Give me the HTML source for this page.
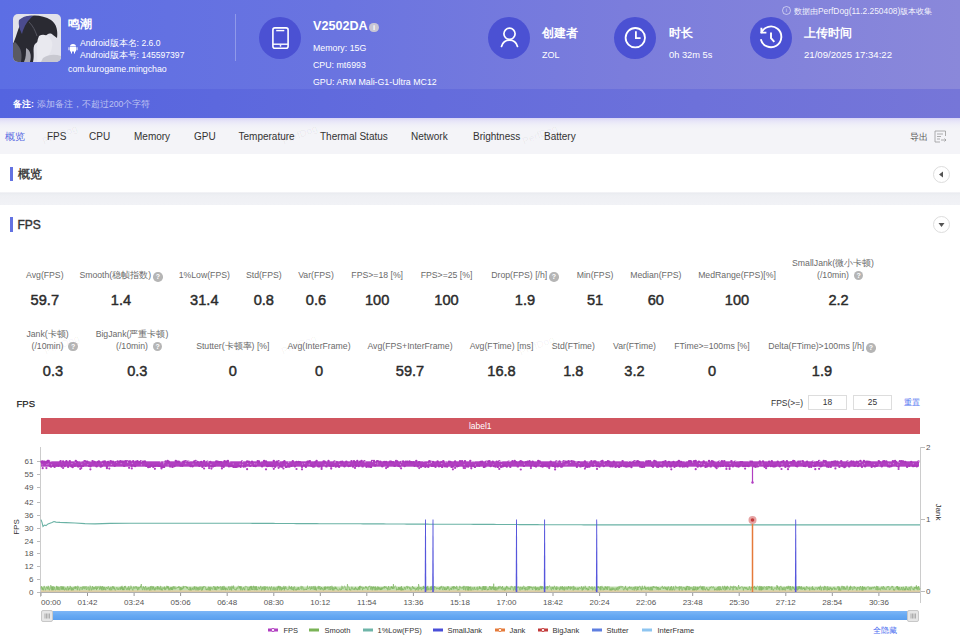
<!DOCTYPE html>
<html><head><meta charset="utf-8">
<style>
*{margin:0;padding:0;box-sizing:border-box}
html,body{width:960px;height:638px;overflow:hidden;background:#fff;font-family:"Liberation Sans",sans-serif}
.a{position:absolute;white-space:nowrap}
#hdr{position:absolute;left:0;top:0;width:960px;height:89px;background:linear-gradient(90deg,#5c6ee4 0%,#6a74e0 35%,#7b7ddc 65%,#8a88da 100%)}
#note{position:absolute;left:0;top:89px;width:960px;height:29px;background:linear-gradient(90deg,#5464e0 0%,#646cdc 45%,#7676d8 100%)}
.w{color:#fff}
.circ{position:absolute;width:42px;height:42px;border-radius:50%;background:#4b51d3}
#tabs{position:absolute;left:0;top:118px;width:960px;height:36px;background:linear-gradient(180deg,#d9d5f5 0px,#e7e5f8 3px,#f0f0f8 7px,#f4f4f8 11px,#f4f4f8 100%)}
.tab{position:absolute;top:130.5px;font-size:10px;color:#333;line-height:12px}
.lbl{position:absolute;font-size:8.7px;color:#6a6a6a;line-height:11px;text-align:center;white-space:nowrap}
.val{position:absolute;font-size:14.6px;font-weight:normal;-webkit-text-stroke:0.45px #2b2b2b;color:#2b2b2b;line-height:16px;text-align:center;white-space:nowrap}
.q{display:inline-block;width:9.5px;height:9.5px;border-radius:50%;background:#b5b5b5;color:#fff;font-size:7px;line-height:9.5px;text-align:center;font-weight:bold;vertical-align:-1.5px;margin-left:2px}
.lg{top:624.5px;font-size:7.5px;color:#333;line-height:11px}
.hi{font-size:8.8px;line-height:12px}
</style></head><body>
<div id="hdr"></div>
<div id="note"></div>
<!-- app icon -->
<svg class="a" style="left:13px;top:14px" width="48" height="48" viewBox="0 0 48 48">
 <defs><clipPath id="rc"><rect x="0" y="0" width="48" height="48" rx="5"/></clipPath>
 <filter id="bl"><feGaussianBlur stdDeviation="0.7"/></filter></defs>
 <g clip-path="url(#rc)">
  <rect width="48" height="48" fill="#e2e2ea"/>
  <g filter="url(#bl)">
  <path d="M10 4 C18 0 30 1 38 6 C44 10 45 18 44 24 L40 21 C37 18 34 20 32 23 C29 27 26 26 22 30 C19 34 22 40 20 48 L0 48 L0 30 C3 24 5 14 10 4z" fill="#2a2a33"/>
  <path d="M6 6 C10 2 16 1 20 2 C15 6 11 12 9 20 C7 16 5 11 6 6z" fill="#4b4c8e"/>
  <path d="M26 22 C31 19 37 22 39 28 C40 35 37 41 32 46 L24 48 C25 40 22 31 26 22z" fill="#e9e9ef"/>
  <path d="M2 28 C6 32 10 36 8 48 L0 48 L0 30z" fill="#5a5a64"/>
  <path d="M13 34 C17 36 19 41 17 48 L11 48 C13 44 13 39 13 34z" fill="#a4a4ae"/>
  <path d="M30 44 C36 40 42 40 48 42 L48 48 L28 48z" fill="#c8c8d0"/>
  <path d="M16 8 C20 12 22 16 24 22" stroke="#55555f" stroke-width="1" fill="none"/>
  </g>
 </g>
</svg>
<div class="a w" style="left:68px;top:15.5px;font-size:12px;font-weight:bold;line-height:16px">鸣潮</div>
<div class="a w hi" style="left:80px;top:36.5px;font-size:8.6px">Android版本名: 2.6.0</div>
<div class="a w hi" style="left:80px;top:48.5px;font-size:8.6px">Android版本号: 145597397</div>
<div class="a w hi" style="left:68px;top:63px">com.kurogame.mingchao</div>
<svg class="a" style="left:68px;top:43px" width="10" height="11" viewBox="0 0 10 11"><path d="M2 4h6v4.5h-6z M0.5 4.2h1v3h-1z M8.5 4.2h1v3h-1z M3 8.5h1v2h-1z M6 8.5h1v2h-1z M2 3.5a3 2.5 0 0 1 6 0z" fill="#fff"/></svg>
<div class="a" style="left:234.5px;top:14px;width:1px;height:47px;background:rgba(255,255,255,0.28)"></div>
<!-- device -->
<div class="circ" style="left:259px;top:17px"></div>
<svg class="a" style="left:271px;top:26px" width="20" height="24" viewBox="0 0 20 24"><rect x="1.9" y="1.9" width="15.2" height="20.3" rx="2" fill="none" stroke="#fff" stroke-width="1.6"/><line x1="5.2" y1="4.6" x2="13.3" y2="4.6" stroke="#fff" stroke-width="1.4"/><line x1="1.9" y1="18.2" x2="17.1" y2="18.2" stroke="#fff" stroke-width="1.4"/><circle cx="9.5" cy="19.8" r="0.9" fill="#fff"/></svg>
<div class="a w" style="left:313px;top:17.5px;font-size:12.6px;font-weight:bold;line-height:16px">V2502DA</div>
<div class="a" style="left:369.3px;top:22.5px;width:9.5px;height:9.5px;border-radius:50%;background:#c8c6d4;color:#fff;font-size:7.5px;line-height:9.5px;text-align:center;font-weight:bold">i</div>
<div class="a w hi" style="left:313px;top:41.5px">Memory: 15G</div>
<div class="a w hi" style="left:313px;top:58.5px">CPU: mt6993</div>
<div class="a w hi" style="left:313px;top:75.5px">GPU: ARM Mali-G1-Ultra MC12</div>
<!-- creator -->
<div class="circ" style="left:488px;top:17px"></div>
<svg class="a" style="left:498.5px;top:27px" width="21" height="22" viewBox="0 0 21 22"><circle cx="10.5" cy="6.8" r="5.6" fill="none" stroke="#fff" stroke-width="1.7"/><path d="M2.5 19.5 C3.8 15 7 13.2 10.5 13.2 C14 13.2 17.2 15 18.5 19.5" fill="none" stroke="#fff" stroke-width="1.7" stroke-linecap="round"/></svg>
<div class="a w" style="left:542px;top:25.5px;font-size:12px;font-weight:bold;line-height:15px">创建者</div>
<div class="a w" style="left:542px;top:49px;font-size:9px;line-height:12px">ZOL</div>
<!-- duration -->
<div class="circ" style="left:614px;top:17px"></div>
<svg class="a" style="left:624px;top:27px" width="22" height="22" viewBox="0 0 22 22"><circle cx="11.3" cy="10.7" r="9.7" fill="none" stroke="#fff" stroke-width="1.8"/><path d="M11.9 4.3V11.1H16.6" fill="none" stroke="#fff" stroke-width="1.8"/></svg>
<div class="a w" style="left:669px;top:25.5px;font-size:12px;font-weight:bold;line-height:15px">时长</div>
<div class="a w" style="left:669px;top:49px;font-size:9.3px;line-height:12px">0h 32m 5s</div>
<!-- upload -->
<div class="circ" style="left:750px;top:17px"></div>
<svg class="a" style="left:759px;top:26px;overflow:visible" width="24" height="24" viewBox="0 0 24 24"><path d="M2.2 7.2 A10.4 10.4 0 1 1 1.8 13.2" fill="none" stroke="#fff" stroke-width="1.9"/><path d="M2.4 1.8 V6.6 H7.4" fill="none" stroke="#fff" stroke-width="1.9" stroke-linejoin="miter"/><path d="M12 6.5v5.6l3.3 3.8" fill="none" stroke="#fff" stroke-width="1.9"/></svg>
<div class="a w" style="left:804px;top:25.5px;font-size:12px;font-weight:bold;line-height:15px">上传时间</div>
<div class="a w" style="left:804px;top:49px;font-size:9.6px;line-height:12px">21/09/2025 17:34:22</div>
<div class="a" style="left:782px;top:5.5px;width:9px;height:9px;border-radius:50%;border:1px solid rgba(255,255,255,0.55);color:rgba(255,255,255,0.7);font-size:6px;line-height:7px;text-align:center">i</div>
<div class="a" style="left:794px;top:4.5px;font-size:8.4px;line-height:12px;color:rgba(255,255,255,0.92)">数据由PerfDog(11.2.250408)版本收集</div>
<!-- note -->
<div class="a w" style="left:13px;top:97.5px;font-size:8.6px;font-weight:bold;line-height:12px">备注:</div>
<div class="a" style="left:37px;top:97.5px;font-size:8.6px;line-height:12px;color:rgba(255,255,255,0.6)">添加备注，不超过200个字符</div>
<!-- tabs -->
<div id="tabs"></div>
<div class="tab" style="left:5px;color:#5668e2">概览</div>
<div class="tab" style="left:47px">FPS</div>
<div class="tab" style="left:89px">CPU</div>
<div class="tab" style="left:134px">Memory</div>
<div class="tab" style="left:194px">GPU</div>
<div class="tab" style="left:238.5px">Temperature</div>
<div class="tab" style="left:320px">Thermal Status</div>
<div class="tab" style="left:411px">Network</div>
<div class="tab" style="left:473px">Brightness</div>
<div class="tab" style="left:544px">Battery</div>
<div class="tab" style="left:910px;font-size:9px;color:#555;top:131px">导出</div>
<svg class="a" style="left:934px;top:130px" width="13" height="13" viewBox="0 0 13 13"><path d="M11.5 6V1H1v11h5" fill="none" stroke="#999" stroke-width="0.8"/><path d="M3 4h6M3 6.5h4M3 9h3M7 10h5M10.5 8.5l1.5 1.5-1.5 1.5" fill="none" stroke="#999" stroke-width="0.8"/></svg>
<!-- sections -->
<div class="a" style="left:0;top:192px;width:960px;height:13px;background:linear-gradient(180deg,#fafafc 0px,#e9eaef 1px,#eceef2 2px,#eff0f4 4px,#f1f2f6 100%)"></div>
<div class="a" style="left:10px;top:166.5px;width:3px;height:14.5px;background:#6372e2"></div>
<div class="a" style="left:18px;top:166px;font-size:12px;-webkit-text-stroke:0.35px #333;color:#333;line-height:16px">概览</div>
<div class="a" style="left:932.5px;top:165.5px;width:17px;height:17px;border-radius:50%;border:1px solid #ddd"></div>
<svg class="a" style="left:937px;top:170px" width="9" height="9" viewBox="0 0 9 9"><path d="M6 1.5v6l-4-3z" fill="#555"/></svg>
<div class="a" style="left:10px;top:217px;width:3px;height:15px;background:#6372e2"></div>
<div class="a" style="left:17.5px;top:216.5px;font-size:12px;-webkit-text-stroke:0.4px #333;color:#333;line-height:16px">FPS</div>
<div class="a" style="left:932.5px;top:215.5px;width:17px;height:17px;border-radius:50%;border:1px solid #ddd"></div>
<svg class="a" style="left:937px;top:220px" width="9" height="9" viewBox="0 0 9 9"><path d="M1.5 3h6l-3 4z" fill="#555"/></svg>
<!-- metrics -->
<div class="lbl" style="left:-45.2px;top:269.5px;width:180px">Avg(FPS)</div>
<div class="val" style="left:-5.200000000000003px;top:291.5px;width:100px">59.7</div>
<div class="lbl" style="left:31px;top:269.5px;width:180px">Smooth(稳帧指数)<span class="q">?</span></div>
<div class="val" style="left:71px;top:291.5px;width:100px">1.4</div>
<div class="lbl" style="left:114.30000000000001px;top:269.5px;width:180px">1%Low(FPS)</div>
<div class="val" style="left:154.3px;top:291.5px;width:100px">31.4</div>
<div class="lbl" style="left:173.8px;top:269.5px;width:180px">Std(FPS)</div>
<div class="val" style="left:213.8px;top:291.5px;width:100px">0.8</div>
<div class="lbl" style="left:226px;top:269.5px;width:180px">Var(FPS)</div>
<div class="val" style="left:266px;top:291.5px;width:100px">0.6</div>
<div class="lbl" style="left:287.2px;top:269.5px;width:180px">FPS&gt;=18 [%]</div>
<div class="val" style="left:327.2px;top:291.5px;width:100px">100</div>
<div class="lbl" style="left:356.5px;top:269.5px;width:180px">FPS&gt;=25 [%]</div>
<div class="val" style="left:396.5px;top:291.5px;width:100px">100</div>
<div class="lbl" style="left:435px;top:269.5px;width:180px">Drop(FPS) [/h]<span class="q">?</span></div>
<div class="val" style="left:475px;top:291.5px;width:100px">1.9</div>
<div class="lbl" style="left:505px;top:269.5px;width:180px">Min(FPS)</div>
<div class="val" style="left:545px;top:291.5px;width:100px">51</div>
<div class="lbl" style="left:565.8px;top:269.5px;width:180px">Median(FPS)</div>
<div class="val" style="left:605.8px;top:291.5px;width:100px">60</div>
<div class="lbl" style="left:647px;top:269.5px;width:180px">MedRange(FPS)[%]</div>
<div class="val" style="left:687px;top:291.5px;width:100px">100</div>
<div class="lbl" style="left:743px;top:257.5px;width:180px">SmallJank(微小卡顿)</div><div class="lbl" style="left:743px;top:269.5px;width:180px"><span style="position:relative">(/10min)<span class="q" style="position:absolute;left:100%;top:1px;margin-left:5px">?</span></span></div>
<div class="val" style="left:788.6px;top:291.5px;width:100px">2.2</div>
<div class="lbl" style="left:-42.5px;top:328.5px;width:180px">Jank(卡顿)</div><div class="lbl" style="left:-42.5px;top:340.5px;width:180px"><span style="position:relative">(/10min)<span class="q" style="position:absolute;left:100%;top:1px;margin-left:5px">?</span></span></div>
<div class="val" style="left:3px;top:363px;width:100px">0.3</div>
<div class="lbl" style="left:42px;top:328.5px;width:180px">BigJank(严重卡顿)</div><div class="lbl" style="left:42px;top:340.5px;width:180px"><span style="position:relative">(/10min)<span class="q" style="position:absolute;left:100%;top:1px;margin-left:5px">?</span></span></div>
<div class="val" style="left:87.30000000000001px;top:363px;width:100px">0.3</div>
<div class="lbl" style="left:142.8px;top:340.5px;width:180px">Stutter(卡顿率) [%]</div>
<div class="val" style="left:182.8px;top:363px;width:100px">0</div>
<div class="lbl" style="left:229px;top:340.5px;width:180px">Avg(InterFrame)</div>
<div class="val" style="left:269px;top:363px;width:100px">0</div>
<div class="lbl" style="left:320px;top:340.5px;width:180px">Avg(FPS+InterFrame)</div>
<div class="val" style="left:360px;top:363px;width:100px">59.7</div>
<div class="lbl" style="left:411.5px;top:340.5px;width:180px">Avg(FTime) [ms]</div>
<div class="val" style="left:451.5px;top:363px;width:100px">16.8</div>
<div class="lbl" style="left:483.29999999999995px;top:340.5px;width:180px">Std(FTime)</div>
<div class="val" style="left:523.3px;top:363px;width:100px">1.8</div>
<div class="lbl" style="left:544.5px;top:340.5px;width:180px">Var(FTime)</div>
<div class="val" style="left:584.5px;top:363px;width:100px">3.2</div>
<div class="lbl" style="left:622px;top:340.5px;width:180px">FTime&gt;=100ms [%]</div>
<div class="val" style="left:662px;top:363px;width:100px">0</div>
<div class="lbl" style="left:732px;top:340.5px;width:180px">Delta(FTime)&gt;100ms [/h]<span class="q">?</span></div>
<div class="val" style="left:772px;top:363px;width:100px">1.9</div>
<!-- chart controls -->
<div class="a" style="left:16.5px;top:398px;font-size:9.5px;color:#222;-webkit-text-stroke:0.25px #222;line-height:12px">FPS</div>
<div class="a" style="left:771px;top:396.5px;font-size:8.5px;color:#333;line-height:12px">FPS(&gt;=)</div>
<div class="a" style="left:808px;top:395px;width:39px;height:15px;border:1px solid #ddd;font-size:8.4px;line-height:13px;text-align:center;color:#333">18</div>
<div class="a" style="left:853px;top:395px;width:39px;height:15px;border:1px solid #ddd;font-size:8.4px;line-height:13px;text-align:center;color:#333">25</div>
<div class="a" style="left:904px;top:397px;font-size:8px;color:#4a6cf0;line-height:12px">重置</div>
<div class="a" style="left:40.5px;top:418px;width:879.5px;height:16px;background:#d0555f;color:#fff;font-size:8.5px;line-height:16px;text-align:center">label1</div>
<svg class="a" style="left:0;top:0" width="960" height="638" viewBox="0 0 960 638" font-family="Liberation Sans, sans-serif">
<line x1="40.5" y1="447" x2="40.5" y2="597" stroke="#ccc" stroke-width="1"/>
<line x1="920.5" y1="447" x2="920.5" y2="603" stroke="#ccc" stroke-width="1"/>
<line x1="37" y1="592.5" x2="40" y2="592.5" stroke="#bbb"/>
<text x="33.5" y="595.3" text-anchor="end" font-size="8" fill="#555">0</text>
<line x1="37" y1="579.5" x2="40" y2="579.5" stroke="#bbb"/>
<text x="33.5" y="582.3" text-anchor="end" font-size="8" fill="#555">6</text>
<line x1="37" y1="566.5" x2="40" y2="566.5" stroke="#bbb"/>
<text x="33.5" y="569.3" text-anchor="end" font-size="8" fill="#555">12</text>
<line x1="37" y1="553.5" x2="40" y2="553.5" stroke="#bbb"/>
<text x="33.5" y="556.3" text-anchor="end" font-size="8" fill="#555">18</text>
<line x1="37" y1="541.5" x2="40" y2="541.5" stroke="#bbb"/>
<text x="33.5" y="544.3" text-anchor="end" font-size="8" fill="#555">24</text>
<line x1="37" y1="528.5" x2="40" y2="528.5" stroke="#bbb"/>
<text x="33.5" y="531.3" text-anchor="end" font-size="8" fill="#555">30</text>
<line x1="37" y1="515.5" x2="40" y2="515.5" stroke="#bbb"/>
<text x="33.5" y="518.3" text-anchor="end" font-size="8" fill="#555">36</text>
<line x1="37" y1="502.5" x2="40" y2="502.5" stroke="#bbb"/>
<text x="33.5" y="505.3" text-anchor="end" font-size="8" fill="#555">42</text>
<line x1="37" y1="487.5" x2="40" y2="487.5" stroke="#bbb"/>
<text x="33.5" y="490.3" text-anchor="end" font-size="8" fill="#555">49</text>
<line x1="37" y1="474.5" x2="40" y2="474.5" stroke="#bbb"/>
<text x="33.5" y="477.3" text-anchor="end" font-size="8" fill="#555">55</text>
<line x1="37" y1="461.5" x2="40" y2="461.5" stroke="#bbb"/>
<text x="33.5" y="464.3" text-anchor="end" font-size="8" fill="#555">61</text>
<line x1="921" y1="447.5" x2="925" y2="447.5" stroke="#bbb"/>
<text x="926" y="450.3" font-size="8" fill="#555">2</text>
<line x1="921" y1="519.5" x2="925" y2="519.5" stroke="#bbb"/>
<text x="926" y="522.3" font-size="8" fill="#555">1</text>
<line x1="921" y1="591.5" x2="925" y2="591.5" stroke="#bbb"/>
<text x="926" y="594.3" font-size="8" fill="#555">0</text>
<line x1="41.0" y1="592" x2="41.0" y2="596" stroke="#999"/>
<text x="41.0" y="605" font-size="8" fill="#555">00:00</text>
<line x1="87.5" y1="592" x2="87.5" y2="596" stroke="#999"/>
<text x="87.5" y="605" text-anchor="middle" font-size="8" fill="#555">01:42</text>
<line x1="134.1" y1="592" x2="134.1" y2="596" stroke="#999"/>
<text x="134.1" y="605" text-anchor="middle" font-size="8" fill="#555">03:24</text>
<line x1="180.6" y1="592" x2="180.6" y2="596" stroke="#999"/>
<text x="180.6" y="605" text-anchor="middle" font-size="8" fill="#555">05:06</text>
<line x1="227.2" y1="592" x2="227.2" y2="596" stroke="#999"/>
<text x="227.2" y="605" text-anchor="middle" font-size="8" fill="#555">06:48</text>
<line x1="273.8" y1="592" x2="273.8" y2="596" stroke="#999"/>
<text x="273.8" y="605" text-anchor="middle" font-size="8" fill="#555">08:30</text>
<line x1="320.3" y1="592" x2="320.3" y2="596" stroke="#999"/>
<text x="320.3" y="605" text-anchor="middle" font-size="8" fill="#555">10:12</text>
<line x1="366.8" y1="592" x2="366.8" y2="596" stroke="#999"/>
<text x="366.8" y="605" text-anchor="middle" font-size="8" fill="#555">11:54</text>
<line x1="413.4" y1="592" x2="413.4" y2="596" stroke="#999"/>
<text x="413.4" y="605" text-anchor="middle" font-size="8" fill="#555">13:36</text>
<line x1="459.9" y1="592" x2="459.9" y2="596" stroke="#999"/>
<text x="459.9" y="605" text-anchor="middle" font-size="8" fill="#555">15:18</text>
<line x1="506.5" y1="592" x2="506.5" y2="596" stroke="#999"/>
<text x="506.5" y="605" text-anchor="middle" font-size="8" fill="#555">17:00</text>
<line x1="553.0" y1="592" x2="553.0" y2="596" stroke="#999"/>
<text x="553.0" y="605" text-anchor="middle" font-size="8" fill="#555">18:42</text>
<line x1="599.6" y1="592" x2="599.6" y2="596" stroke="#999"/>
<text x="599.6" y="605" text-anchor="middle" font-size="8" fill="#555">20:24</text>
<line x1="646.1" y1="592" x2="646.1" y2="596" stroke="#999"/>
<text x="646.1" y="605" text-anchor="middle" font-size="8" fill="#555">22:06</text>
<line x1="692.7" y1="592" x2="692.7" y2="596" stroke="#999"/>
<text x="692.7" y="605" text-anchor="middle" font-size="8" fill="#555">23:48</text>
<line x1="739.2" y1="592" x2="739.2" y2="596" stroke="#999"/>
<text x="739.2" y="605" text-anchor="middle" font-size="8" fill="#555">25:30</text>
<line x1="785.8" y1="592" x2="785.8" y2="596" stroke="#999"/>
<text x="785.8" y="605" text-anchor="middle" font-size="8" fill="#555">27:12</text>
<line x1="832.3" y1="592" x2="832.3" y2="596" stroke="#999"/>
<text x="832.3" y="605" text-anchor="middle" font-size="8" fill="#555">28:54</text>
<line x1="878.9" y1="592" x2="878.9" y2="596" stroke="#999"/>
<text x="878.9" y="605" text-anchor="middle" font-size="8" fill="#555">30:36</text>
<text transform="translate(18.5,527) rotate(-90)" text-anchor="middle" font-size="8" fill="#333">FPS</text>
<text transform="translate(936,512) rotate(90)" text-anchor="middle" font-size="8" fill="#333">Jank</text>
<line x1="41" y1="588.6" x2="920" y2="588.6" stroke="#a8d48e" stroke-width="4" opacity="0.7"/>
<polyline points="41.00,588.5 41.40,586.2 41.80,588.2 42.20,589.8 42.60,587.6 43.00,590.3 43.40,590.3 43.80,587.3 44.20,585.9 44.60,587.5 45.00,588.2 45.39,590.4 45.79,589.5 46.19,588.4 46.59,586.6 46.99,587.6 47.39,587.4 47.79,589.3 48.19,585.8 48.59,587.2 48.99,589.6 49.39,590.4 49.79,588.7 50.19,588.8 50.59,585.3 50.99,586.2 51.39,585.9 51.79,590.4 52.19,586.9 52.59,590.3 52.99,586.0 53.39,590.1 53.79,590.2 54.19,586.8 54.58,588.0 54.98,589.8 55.38,590.1 55.78,590.1 56.18,589.7 56.58,585.9 56.98,589.2 57.38,589.7 57.78,586.5 58.18,590.2 58.58,589.7 58.98,586.9 59.38,589.3 59.78,590.3 60.18,589.5 60.58,588.9 60.98,586.0 61.38,587.9 61.78,589.8 62.18,586.2 62.58,589.5 62.98,587.1 63.37,589.7 63.77,586.4 64.17,588.6 64.57,590.5 64.97,589.5 65.37,589.4 65.77,587.8 66.17,589.8 66.57,590.4 66.97,588.0 67.37,587.7 67.77,586.2 68.17,590.6 68.57,588.5 68.97,589.8 69.37,587.9 69.77,588.9 70.17,585.9 70.57,587.3 70.97,590.0 71.37,590.6 71.77,587.3 72.16,590.6 72.56,588.3 72.96,589.1 73.36,590.3 73.76,587.1 74.16,587.1 74.56,586.8 74.96,589.0 75.36,586.3 75.76,588.7 76.16,586.5 76.56,587.6 76.96,587.8 77.36,590.3 77.76,585.8 78.16,587.1 78.56,587.1 78.96,588.5 79.36,590.3 79.76,590.6 80.16,588.3 80.56,587.3 80.95,587.7 81.35,588.1 81.75,587.4 82.15,589.9 82.55,587.5 82.95,586.3 83.35,587.4 83.75,588.6 84.15,586.2 84.55,588.8 84.95,589.2 85.35,588.3 85.75,586.5 86.15,586.0 86.55,589.9 86.95,589.4 87.35,588.7 87.75,588.3 88.15,586.6 88.55,588.5 88.95,590.6 89.34,590.5 89.74,587.9 90.14,585.7 90.54,586.2 90.94,589.5 91.34,590.5 91.74,588.5 92.14,587.5 92.54,586.0 92.94,589.7 93.34,588.2 93.74,587.2 94.14,589.4 94.54,587.3 94.94,587.7 95.34,588.8 95.74,586.2 96.14,586.1 96.54,590.1 96.94,587.6 97.34,588.9 97.74,586.4 98.13,586.1 98.53,587.5 98.93,587.2 99.33,587.6 99.73,589.7 100.13,585.9 100.53,588.1 100.93,589.1 101.33,586.5 101.73,590.3 102.13,588.0 102.53,586.1 102.93,590.4 103.33,589.9 103.73,586.8 104.13,590.0 104.53,587.1 104.93,587.3 105.33,588.3 105.73,590.3 106.13,588.1 106.53,587.1 106.92,588.1 107.32,588.0 107.72,588.8 108.12,586.3 108.52,586.5 108.92,588.1 109.32,589.7 109.72,588.2 110.12,590.6 110.52,588.2 110.92,586.8 111.32,588.3 111.72,590.4 112.12,588.7 112.52,586.2 112.92,588.4 113.32,588.6 113.72,586.3 114.12,589.2 114.52,587.7 114.92,590.1 115.32,590.6 115.72,589.6 116.11,589.1 116.51,587.7 116.91,587.1 117.31,588.2 117.71,589.7 118.11,588.6 118.51,588.7 118.91,589.9 119.31,587.6 119.71,588.1 120.11,587.7 120.51,589.6 120.91,586.7 121.31,589.2 121.71,586.2 122.11,585.8 122.51,590.1 122.91,587.1 123.31,590.2 123.71,588.6 124.11,590.1 124.50,586.1 124.90,587.4 125.30,585.9 125.70,588.2 126.10,588.2 126.50,589.8 126.90,590.2 127.30,588.0 127.70,587.9 128.10,589.8 128.50,586.6 128.90,586.1 129.30,590.4 129.70,588.4 130.10,589.1 130.50,588.2 130.90,585.7 131.30,586.6 131.70,588.5 132.10,588.7 132.50,589.9 132.90,590.6 133.30,586.8 133.69,586.5 134.09,588.7 134.49,588.2 134.89,586.7 135.29,586.2 135.69,586.9 136.09,588.7 136.49,586.4 136.89,586.9 137.29,588.7 137.69,590.4 138.09,586.9 138.49,587.6 138.89,589.6 139.29,587.4 139.69,587.5 140.09,588.1 140.49,585.8 140.89,587.3 141.29,584.0 141.69,587.1 142.08,588.7 142.48,589.8 142.88,590.2 143.28,586.3 143.68,588.2 144.08,587.9 144.48,587.6 144.88,590.3 145.28,587.0 145.68,586.1 146.08,588.4 146.48,588.3 146.88,590.4 147.28,588.6 147.68,587.8 148.08,589.3 148.48,588.0 148.88,587.2 149.28,590.6 149.68,590.5 150.08,587.0 150.48,586.3 150.88,590.5 151.27,586.1 151.67,586.3 152.07,588.4 152.47,589.5 152.87,586.1 153.27,588.4 153.67,586.7 154.07,590.1 154.47,588.5 154.87,590.5 155.27,590.1 155.67,587.4 156.07,589.4 156.47,588.6 156.87,588.1 157.27,586.0 157.67,589.5 158.07,586.3 158.47,587.6 158.87,589.4 159.27,587.9 159.67,587.6 160.06,589.8 160.46,585.9 160.86,586.4 161.26,590.4 161.66,588.6 162.06,590.2 162.46,590.4 162.86,587.4 163.26,587.6 163.66,588.4 164.06,589.0 164.46,586.6 164.86,590.1 165.26,587.6 165.66,589.7 166.06,589.4 166.46,588.9 166.86,585.8 167.26,588.0 167.66,586.2 168.06,588.9 168.45,586.4 168.85,590.3 169.25,588.3 169.65,589.2 170.05,590.3 170.45,587.5 170.85,589.2 171.25,587.3 171.65,590.0 172.05,587.1 172.45,590.1 172.85,587.9 173.25,586.1 173.65,588.6 174.05,589.2 174.45,588.7 174.85,586.3 175.25,588.9 175.65,588.9 176.05,588.8 176.45,587.9 176.85,588.0 177.25,587.9 177.64,587.0 178.04,587.6 178.44,588.0 178.84,586.0 179.24,586.7 179.64,588.0 180.04,590.3 180.44,587.1 180.84,590.3 181.24,590.0 181.64,587.5 182.04,589.6 182.44,588.1 182.84,588.8 183.24,585.9 183.64,588.3 184.04,587.2 184.44,586.2 184.84,586.6 185.24,586.5 185.64,586.6 186.03,586.0 186.43,588.1 186.83,586.8 187.23,588.6 187.63,587.1 188.03,588.9 188.43,589.7 188.83,589.3 189.23,590.4 189.63,590.1 190.03,586.9 190.43,590.4 190.83,587.8 191.23,590.5 191.63,589.8 192.03,589.6 192.43,587.8 192.83,589.8 193.23,589.9 193.63,589.2 194.03,586.7 194.43,589.4 194.82,586.2 195.22,588.0 195.62,588.3 196.02,590.5 196.42,586.8 196.82,588.1 197.22,589.4 197.62,587.5 198.02,590.7 198.42,588.9 198.82,587.2 199.22,589.9 199.62,589.1 200.02,586.4 200.42,587.6 200.82,589.4 201.22,590.0 201.62,590.7 202.02,586.5 202.42,590.3 202.82,587.2 203.22,588.3 203.62,586.0 204.01,586.5 204.41,586.8 204.81,586.2 205.21,586.6 205.61,588.0 206.01,589.9 206.41,589.2 206.81,590.3 207.21,588.4 207.61,588.9 208.01,590.2 208.41,588.4 208.81,586.6 209.21,590.7 209.61,587.2 210.01,587.9 210.41,590.7 210.81,586.8 211.21,587.7 211.61,588.9 212.01,589.2 212.41,588.8 212.80,589.5 213.20,587.1 213.60,586.1 214.00,587.1 214.40,586.6 214.80,590.0 215.20,587.4 215.60,589.8 216.00,586.6 216.40,590.3 216.80,589.9 217.20,588.7 217.60,586.2 218.00,588.2 218.40,586.9 218.80,588.8 219.20,587.1 219.60,587.3 220.00,586.8 220.40,586.3 220.80,589.0 221.19,590.2 221.59,588.2 221.99,586.6 222.39,589.9 222.79,586.3 223.19,589.0 223.59,590.0 223.99,585.9 224.39,587.2 224.79,589.7 225.19,587.6 225.59,590.3 225.99,587.9 226.39,589.1 226.79,588.9 227.19,590.1 227.59,590.0 227.99,588.0 228.39,588.0 228.79,586.2 229.19,586.7 229.59,590.1 229.99,589.3 230.38,589.5 230.78,586.6 231.18,588.0 231.58,590.6 231.98,585.8 232.38,587.5 232.78,587.4 233.18,588.8 233.58,585.6 233.98,588.4 234.38,588.8 234.78,589.9 235.18,589.4 235.58,589.1 235.98,590.5 236.38,590.0 236.78,587.8 237.18,588.7 237.58,587.3 237.98,587.0 238.38,585.8 238.78,586.5 239.17,588.6 239.57,586.3 239.97,588.1 240.37,586.3 240.77,590.4 241.17,586.3 241.57,587.8 241.97,589.2 242.37,590.4 242.77,588.5 243.17,588.8 243.57,587.3 243.97,589.5 244.37,588.8 244.77,590.4 245.17,586.0 245.57,586.4 245.97,586.7 246.37,587.0 246.77,586.3 247.17,586.8 247.56,588.1 247.96,590.7 248.36,589.2 248.76,590.4 249.16,586.7 249.56,589.0 249.96,590.5 250.36,586.3 250.76,588.3 251.16,585.9 251.56,589.7 251.96,586.2 252.36,589.8 252.76,589.0 253.16,589.9 253.56,585.8 253.96,587.6 254.36,586.4 254.76,590.2 255.16,589.2 255.56,586.4 255.96,590.0 256.36,586.1 256.75,590.3 257.15,589.2 257.55,589.7 257.95,589.6 258.35,586.8 258.75,587.5 259.15,587.8 259.55,589.2 259.95,587.4 260.35,587.6 260.75,585.9 261.15,588.1 261.55,590.5 261.95,589.3 262.35,586.8 262.75,589.3 263.15,589.5 263.55,588.0 263.95,586.3 264.35,590.5 264.75,587.0 265.14,586.1 265.54,589.8 265.94,587.5 266.34,587.5 266.74,588.2 267.14,586.5 267.54,588.1 267.94,589.9 268.34,589.9 268.74,589.6 269.14,586.9 269.54,586.8 269.94,588.3 270.34,587.9 270.74,590.5 271.14,587.2 271.54,586.4 271.94,588.3 272.34,588.6 272.74,589.4 273.14,590.4 273.54,587.9 273.94,586.8 274.33,590.0 274.73,590.5 275.13,587.7 275.53,589.4 275.93,590.3 276.33,589.9 276.73,589.9 277.13,586.6 277.53,590.4 277.93,588.9 278.33,585.9 278.73,588.3 279.13,585.9 279.53,588.5 279.93,590.5 280.33,586.3 280.73,588.8 281.13,588.6 281.53,590.5 281.93,587.0 282.33,589.6 282.73,588.0 283.12,588.4 283.52,588.9 283.92,585.9 284.32,590.5 284.72,587.5 285.12,589.0 285.52,586.5 285.92,586.3 286.32,588.8 286.72,588.8 287.12,589.7 287.52,589.8 287.92,589.9 288.32,589.7 288.72,589.2 289.12,585.8 289.52,586.5 289.92,588.8 290.32,587.3 290.72,588.2 291.12,589.4 291.51,586.2 291.91,589.4 292.31,590.0 292.71,588.9 293.11,587.1 293.51,590.6 293.91,588.8 294.31,586.4 294.71,586.9 295.11,590.4 295.51,589.5 295.91,590.0 296.31,590.6 296.71,588.6 297.11,590.0 297.51,589.4 297.91,587.4 298.31,589.7 298.71,587.2 299.11,588.8 299.51,589.6 299.91,589.0 300.31,588.6 300.70,587.9 301.10,585.9 301.50,587.4 301.90,589.6 302.30,587.4 302.70,586.4 303.10,587.6 303.50,588.6 303.90,590.4 304.30,589.1 304.70,589.3 305.10,588.7 305.50,589.9 305.90,589.5 306.30,589.0 306.70,590.0 307.10,587.3 307.50,585.7 307.90,588.9 308.30,588.7 308.70,588.3 309.10,588.4 309.49,588.0 309.89,586.3 310.29,589.4 310.69,589.8 311.09,587.7 311.49,588.9 311.89,586.1 312.29,587.6 312.69,588.7 313.09,589.4 313.49,586.4 313.89,586.2 314.29,590.0 314.69,589.2 315.09,585.9 315.49,589.8 315.89,587.4 316.29,590.7 316.69,588.8 317.09,588.3 317.49,588.0 317.88,588.0 318.28,585.9 318.68,589.0 319.08,589.2 319.48,587.3 319.88,586.0 320.28,589.9 320.68,588.3 321.08,588.9 321.48,587.0 321.88,589.5 322.28,589.1 322.68,588.2 323.08,590.4 323.48,590.2 323.88,590.2 324.28,586.9 324.68,589.9 325.08,586.4 325.48,589.5 325.88,586.8 326.28,587.2 326.68,587.2 327.07,589.1 327.47,586.6 327.87,587.9 328.27,587.2 328.67,586.6 329.07,590.1 329.47,587.4 329.87,587.9 330.27,586.1 330.67,590.1 331.07,588.6 331.47,588.8 331.87,585.8 332.27,587.2 332.67,590.5 333.07,587.1 333.47,590.1 333.87,590.6 334.27,588.3 334.67,589.2 335.07,586.6 335.46,588.8 335.86,586.9 336.26,588.8 336.66,588.0 337.06,590.0 337.46,590.2 337.86,589.5 338.26,590.1 338.66,590.6 339.06,590.0 339.46,589.4 339.86,588.3 340.26,589.4 340.66,590.4 341.06,589.2 341.46,589.8 341.86,585.8 342.26,586.4 342.66,588.7 343.06,588.8 343.46,588.0 343.86,587.6 344.25,586.1 344.65,585.8 345.05,586.6 345.45,588.7 345.85,590.1 346.25,588.9 346.65,589.2 347.05,590.7 347.45,584.2 347.85,586.7 348.25,587.1 348.65,586.8 349.05,586.9 349.45,590.2 349.85,588.7 350.25,589.5 350.65,590.6 351.05,589.6 351.45,588.9 351.85,586.7 352.25,587.6 352.65,589.3 353.05,589.1 353.44,589.1 353.84,589.7 354.24,588.0 354.64,589.8 355.04,590.0 355.44,586.9 355.84,588.7 356.24,588.1 356.64,589.7 357.04,589.1 357.44,590.2 357.84,588.6 358.24,589.6 358.64,587.2 359.04,589.4 359.44,586.0 359.84,589.8 360.24,585.8 360.64,587.6 361.04,587.5 361.44,587.7 361.83,586.5 362.23,588.2 362.63,590.2 363.03,587.3 363.43,587.4 363.83,588.8 364.23,587.8 364.63,588.2 365.03,587.6 365.43,587.8 365.83,586.1 366.23,588.4 366.63,587.1 367.03,587.1 367.43,588.7 367.83,590.1 368.23,588.3 368.63,586.6 369.03,586.1 369.43,586.8 369.83,585.8 370.23,586.4 370.62,589.5 371.02,588.5 371.42,586.4 371.82,589.3 372.22,590.4 372.62,586.8 373.02,589.5 373.42,586.5 373.82,588.0 374.22,586.8 374.62,588.9 375.02,590.5 375.42,586.5 375.82,590.1 376.22,588.8 376.62,587.7 377.02,590.4 377.42,589.7 377.82,586.4 378.22,589.7 378.62,587.2 379.02,589.2 379.42,589.3 379.81,587.3 380.21,590.1 380.61,588.4 381.01,590.1 381.41,587.7 381.81,589.7 382.21,587.3 382.61,588.9 383.01,588.7 383.41,587.6 383.81,586.7 384.21,588.5 384.61,586.1 385.01,587.2 385.41,587.9 385.81,586.4 386.21,586.5 386.61,588.5 387.01,588.8 387.41,587.8 387.81,590.4 388.20,589.3 388.60,586.0 389.00,587.3 389.40,589.5 389.80,590.1 390.20,589.5 390.60,589.0 391.00,586.5 391.40,588.0 391.80,586.3 392.20,588.9 392.60,587.2 393.00,589.0 393.40,584.1 393.80,588.4 394.20,588.4 394.60,587.4 395.00,585.9 395.40,585.8 395.80,586.6 396.20,587.3 396.60,590.4 397.00,588.7 397.39,589.6 397.79,589.7 398.19,590.0 398.59,587.1 398.99,589.9 399.39,587.6 399.79,589.5 400.19,587.1 400.59,590.1 400.99,590.6 401.39,586.1 401.79,590.6 402.19,588.1 402.59,590.2 402.99,589.2 403.39,590.1 403.79,590.1 404.19,588.2 404.59,586.9 404.99,588.7 405.39,589.6 405.79,588.0 406.18,586.5 406.58,586.5 406.98,585.9 407.38,588.7 407.78,586.5 408.18,587.6 408.58,586.7 408.98,587.2 409.38,587.1 409.78,589.2 410.18,587.5 410.58,590.5 410.98,590.3 411.38,590.2 411.78,589.1 412.18,587.5 412.58,586.0 412.98,588.2 413.38,588.8 413.78,587.1 414.18,588.9 414.57,588.4 414.97,588.6 415.37,590.5 415.77,590.4 416.17,588.0 416.57,589.6 416.97,588.9 417.37,588.3 417.77,587.0 418.17,590.7 418.57,584.1 418.97,586.0 419.37,587.8 419.77,589.2 420.17,587.8 420.57,588.3 420.97,587.0 421.37,590.3 421.77,589.4 422.17,588.6 422.57,588.7 422.97,587.4 423.37,585.9 423.76,589.1 424.16,586.7 424.56,587.5 424.96,587.0 425.36,587.6 425.76,586.1 426.16,590.6 426.56,587.0 426.96,590.7 427.36,588.7 427.76,585.9 428.16,590.3 428.56,588.5 428.96,588.9 429.36,588.6 429.76,589.1 430.16,590.4 430.56,586.6 430.96,588.0 431.36,590.1 431.76,586.0 432.15,586.2 432.55,588.7 432.95,586.6 433.35,586.4 433.75,590.6 434.15,588.9 434.55,586.1 434.95,587.3 435.35,586.9 435.75,587.1 436.15,587.8 436.55,589.0 436.95,589.0 437.35,588.2 437.75,587.9 438.15,588.9 438.55,588.3 438.95,589.1 439.35,589.6 439.75,587.1 440.15,589.4 440.55,586.6 440.94,587.2 441.34,587.7 441.74,585.9 442.14,588.5 442.54,589.6 442.94,590.2 443.34,586.5 443.74,587.3 444.14,588.0 444.54,590.0 444.94,586.9 445.34,590.2 445.74,589.6 446.14,588.1 446.54,590.1 446.94,587.8 447.34,586.2 447.74,588.9 448.14,587.2 448.54,586.5 448.94,589.4 449.34,590.6 449.74,589.5 450.13,589.5 450.53,588.3 450.93,589.3 451.33,588.2 451.73,589.9 452.13,586.5 452.53,588.0 452.93,588.1 453.33,586.2 453.73,589.4 454.13,586.1 454.53,586.8 454.93,588.5 455.33,587.1 455.73,588.2 456.13,589.0 456.53,586.0 456.93,586.1 457.33,590.4 457.73,590.2 458.13,590.1 458.52,589.2 458.92,590.4 459.32,588.5 459.72,585.9 460.12,586.5 460.52,588.1 460.92,588.1 461.32,588.1 461.72,588.3 462.12,587.2 462.52,588.3 462.92,588.3 463.32,585.9 463.72,590.0 464.12,589.1 464.52,586.1 464.92,586.0 465.32,586.5 465.72,590.6 466.12,587.8 466.52,587.7 466.92,586.1 467.31,588.2 467.71,590.6 468.11,586.4 468.51,590.6 468.91,586.6 469.31,588.2 469.71,587.0 470.11,590.7 470.51,586.8 470.91,586.6 471.31,589.1 471.71,590.6 472.11,589.4 472.51,588.1 472.91,587.4 473.31,589.6 473.71,589.8 474.11,589.5 474.51,586.9 474.91,589.5 475.31,589.4 475.71,589.5 476.11,589.8 476.50,589.2 476.90,587.1 477.30,586.8 477.70,590.3 478.10,589.5 478.50,588.7 478.90,588.9 479.30,586.2 479.70,588.8 480.10,586.8 480.50,589.0 480.90,588.8 481.30,587.8 481.70,588.4 482.10,590.6 482.50,588.8 482.90,586.2 483.30,589.7 483.70,586.0 484.10,589.0 484.50,590.0 484.89,586.1 485.29,590.0 485.69,586.4 486.09,586.0 486.49,588.9 486.89,589.4 487.29,590.4 487.69,589.0 488.09,589.2 488.49,590.1 488.89,588.1 489.29,587.0 489.69,586.0 490.09,589.6 490.49,589.2 490.89,586.2 491.29,589.9 491.69,587.9 492.09,586.8 492.49,588.4 492.89,586.5 493.29,589.8 493.69,583.7 494.08,588.7 494.48,589.9 494.88,587.1 495.28,590.6 495.68,586.8 496.08,587.5 496.48,588.4 496.88,590.5 497.28,587.7 497.68,588.4 498.08,589.2 498.48,586.4 498.88,588.7 499.28,588.4 499.68,586.2 500.08,586.1 500.48,586.4 500.88,588.2 501.28,589.3 501.68,587.1 502.08,587.8 502.48,586.0 502.87,590.2 503.27,589.0 503.67,588.3 504.07,588.2 504.47,590.7 504.87,589.4 505.27,587.6 505.67,590.3 506.07,588.3 506.47,585.9 506.87,588.5 507.27,586.8 507.67,586.6 508.07,589.5 508.47,588.2 508.87,588.0 509.27,588.3 509.67,589.3 510.07,588.2 510.47,589.7 510.87,586.6 511.26,585.9 511.66,587.3 512.06,587.2 512.46,586.8 512.86,586.7 513.26,589.5 513.66,590.6 514.06,589.0 514.46,587.7 514.86,586.1 515.26,590.4 515.66,590.2 516.06,586.4 516.46,589.8 516.86,587.0 517.26,587.6 517.66,587.1 518.06,586.4 518.46,586.8 518.86,587.9 519.26,587.6 519.66,588.8 520.06,590.6 520.45,586.8 520.85,587.5 521.25,587.3 521.65,589.2 522.05,589.8 522.45,587.3 522.85,589.1 523.25,586.2 523.65,586.0 524.05,586.0 524.45,589.1 524.85,588.1 525.25,590.5 525.65,588.1 526.05,587.0 526.45,589.7 526.85,589.5 527.25,590.4 527.65,589.0 528.05,586.0 528.45,588.7 528.85,589.6 529.24,586.0 529.64,588.6 530.04,587.0 530.44,587.6 530.84,586.3 531.24,588.0 531.64,588.1 532.04,586.9 532.44,590.0 532.84,589.4 533.24,587.1 533.64,586.9 534.04,587.2 534.44,588.6 534.84,588.4 535.24,586.3 535.64,590.4 536.04,587.3 536.44,590.1 536.84,587.9 537.24,588.7 537.63,587.4 538.03,590.5 538.43,590.1 538.83,587.4 539.23,588.8 539.63,590.2 540.03,586.5 540.43,587.8 540.83,585.9 541.23,589.2 541.63,586.4 542.03,588.7 542.43,586.3 542.83,586.8 543.23,588.5 543.63,588.6 544.03,589.2 544.43,588.7 544.83,586.9 545.23,588.4 545.63,588.5 546.03,586.3 546.42,586.8 546.82,587.4 547.22,589.3 547.62,586.0 548.02,587.4 548.42,587.5 548.82,586.9 549.22,585.9 549.62,585.6 550.02,586.9 550.42,587.7 550.82,588.8 551.22,589.7 551.62,590.4 552.02,586.7 552.42,588.8 552.82,587.2 553.22,587.0 553.62,589.5 554.02,587.9 554.42,585.8 554.82,586.9 555.22,587.1 555.61,589.4 556.01,588.1 556.41,589.9 556.81,586.3 557.21,589.3 557.61,588.6 558.01,587.7 558.41,588.1 558.81,587.9 559.21,589.0 559.61,590.3 560.01,587.3 560.41,586.6 560.81,589.4 561.21,586.6 561.61,587.5 562.01,589.2 562.41,586.1 562.81,589.8 563.21,590.3 563.61,587.1 564.00,588.3 564.40,590.6 564.80,586.5 565.20,587.2 565.60,589.1 566.00,589.6 566.40,589.2 566.80,586.7 567.20,587.7 567.60,589.6 568.00,587.7 568.40,586.0 568.80,588.5 569.20,586.6 569.60,587.4 570.00,589.0 570.40,589.6 570.80,586.4 571.20,588.9 571.60,587.2 572.00,587.3 572.40,586.6 572.79,587.8 573.19,590.5 573.59,585.9 573.99,586.5 574.39,588.2 574.79,589.8 575.19,587.4 575.59,589.1 575.99,589.3 576.39,589.0 576.79,589.5 577.19,588.0 577.59,587.8 577.99,590.2 578.39,588.4 578.79,589.2 579.19,587.0 579.59,587.5 579.99,588.2 580.39,588.8 580.79,588.4 581.19,588.1 581.59,586.3 581.98,590.6 582.38,590.6 582.78,587.7 583.18,589.8 583.58,586.6 583.98,587.3 584.38,588.5 584.78,588.0 585.18,585.8 585.58,586.6 585.98,589.5 586.38,588.0 586.78,589.2 587.18,588.2 587.58,590.3 587.98,590.6 588.38,588.8 588.78,590.2 589.18,586.1 589.58,587.0 589.98,587.8 590.38,588.4 590.77,587.4 591.17,588.5 591.57,589.1 591.97,586.4 592.37,587.5 592.77,590.4 593.17,589.1 593.57,588.0 593.97,587.6 594.37,586.7 594.77,587.0 595.17,590.5 595.57,590.0 595.97,590.6 596.37,588.4 596.77,589.1 597.17,586.6 597.57,587.6 597.97,586.1 598.37,587.9 598.77,586.7 599.16,587.2 599.56,588.3 599.96,589.5 600.36,586.2 600.76,590.4 601.16,589.5 601.56,586.6 601.96,585.9 602.36,587.6 602.76,587.2 603.16,590.4 603.56,588.8 603.96,587.9 604.36,588.9 604.76,590.0 605.16,586.2 605.56,588.2 605.96,586.9 606.36,589.5 606.76,587.1 607.16,586.5 607.56,589.8 607.96,586.6 608.35,587.0 608.75,587.2 609.15,586.6 609.55,589.9 609.95,590.6 610.35,588.8 610.75,590.5 611.15,587.7 611.55,590.5 611.95,589.3 612.35,590.2 612.75,587.6 613.15,589.9 613.55,588.9 613.95,587.9 614.35,588.8 614.75,590.5 615.15,589.8 615.55,590.7 615.95,587.8 616.35,588.0 616.75,590.1 617.14,587.2 617.54,587.2 617.94,590.5 618.34,589.3 618.74,586.8 619.14,586.2 619.54,588.8 619.94,586.9 620.34,585.9 620.74,586.4 621.14,587.7 621.54,586.3 621.94,586.3 622.34,586.6 622.74,586.0 623.14,588.7 623.54,590.1 623.94,590.4 624.34,589.3 624.74,587.7 625.14,588.5 625.53,585.9 625.93,588.9 626.33,589.8 626.73,589.7 627.13,588.2 627.53,590.7 627.93,589.4 628.33,587.6 628.73,587.2 629.13,588.3 629.53,586.5 629.93,588.6 630.33,588.8 630.73,587.1 631.13,587.3 631.53,586.9 631.93,589.7 632.33,589.9 632.73,588.7 633.13,587.1 633.53,587.4 633.93,590.4 634.33,590.5 634.72,586.7 635.12,588.0 635.52,588.9 635.92,586.3 636.32,590.6 636.72,590.4 637.12,590.1 637.52,586.7 637.92,590.1 638.32,587.1 638.72,588.0 639.12,586.5 639.52,585.9 639.92,586.9 640.32,586.7 640.72,589.4 641.12,588.2 641.52,590.4 641.92,587.7 642.32,585.8 642.72,589.3 643.12,588.2 643.51,588.8 643.91,588.3 644.31,588.3 644.71,585.8 645.11,588.7 645.51,587.4 645.91,590.0 646.31,587.7 646.71,588.5 647.11,588.9 647.51,587.3 647.91,588.3 648.31,590.0 648.71,587.0 649.11,587.4 649.51,588.5 649.91,590.5 650.31,589.1 650.71,586.9 651.11,590.5 651.51,588.4 651.90,586.8 652.30,590.5 652.70,588.4 653.10,586.2 653.50,587.5 653.90,586.2 654.30,587.7 654.70,587.1 655.10,586.8 655.50,588.2 655.90,588.0 656.30,586.5 656.70,588.0 657.10,589.9 657.50,587.0 657.90,588.6 658.30,587.1 658.70,590.1 659.10,589.9 659.50,588.3 659.90,588.9 660.30,589.8 660.70,587.7 661.09,587.3 661.49,587.7 661.89,587.7 662.29,585.9 662.69,587.5 663.09,588.7 663.49,587.5 663.89,589.0 664.29,586.8 664.69,586.6 665.09,587.5 665.49,589.2 665.89,586.8 666.29,589.2 666.69,590.1 667.09,587.6 667.49,590.3 667.89,587.0 668.29,586.4 668.69,588.4 669.09,589.3 669.49,589.3 669.88,590.6 670.28,586.8 670.68,589.8 671.08,590.3 671.48,586.1 671.88,587.8 672.28,590.5 672.68,589.0 673.08,588.9 673.48,586.4 673.88,590.1 674.28,590.3 674.68,590.2 675.08,588.7 675.48,585.8 675.88,586.3 676.28,587.0 676.68,588.4 677.08,587.4 677.48,588.1 677.88,588.2 678.27,587.3 678.67,586.8 679.07,590.3 679.47,590.5 679.87,586.0 680.27,588.6 680.67,587.9 681.07,586.9 681.47,586.5 681.87,590.7 682.27,590.3 682.67,590.4 683.07,586.9 683.47,587.4 683.87,588.1 684.27,588.4 684.67,587.4 685.07,590.0 685.47,588.1 685.87,590.7 686.27,586.6 686.67,589.9 687.07,585.9 687.46,587.0 687.86,586.1 688.26,590.1 688.66,589.6 689.06,586.2 689.46,590.1 689.86,589.5 690.26,587.2 690.66,588.6 691.06,588.4 691.46,588.5 691.86,587.2 692.26,587.9 692.66,590.5 693.06,588.9 693.46,590.3 693.86,586.1 694.26,590.6 694.66,588.9 695.06,590.0 695.46,586.6 695.86,589.8 696.25,590.6 696.65,589.6 697.05,586.8 697.45,589.8 697.85,586.9 698.25,589.2 698.65,589.0 699.05,586.8 699.45,586.7 699.85,587.8 700.25,586.1 700.65,585.8 701.05,586.7 701.45,589.2 701.85,586.6 702.25,589.7 702.65,586.4 703.05,590.5 703.45,589.3 703.85,586.1 704.25,586.7 704.64,589.5 705.04,589.0 705.44,590.4 705.84,588.7 706.24,588.7 706.64,587.3 707.04,589.1 707.44,588.9 707.84,590.5 708.24,589.2 708.64,590.6 709.04,590.6 709.44,588.9 709.84,587.1 710.24,586.8 710.64,588.3 711.04,587.0 711.44,586.8 711.84,586.3 712.24,587.4 712.64,588.1 713.04,588.1 713.43,586.5 713.83,587.0 714.23,587.8 714.63,590.5 715.03,588.9 715.43,589.9 715.83,590.0 716.23,588.3 716.63,589.2 717.03,590.7 717.43,587.1 717.83,586.9 718.23,590.3 718.63,587.1 719.03,586.1 719.43,590.5 719.83,589.0 720.23,586.4 720.63,590.1 721.03,589.4 721.43,590.2 721.83,588.7 722.23,588.6 722.62,586.1 723.02,586.2 723.42,589.6 723.82,588.4 724.22,587.7 724.62,585.8 725.02,590.6 725.42,589.7 725.82,586.6 726.22,589.5 726.62,586.8 727.02,589.4 727.42,585.9 727.82,587.2 728.22,587.0 728.62,588.2 729.02,588.1 729.42,589.1 729.82,590.0 730.22,589.7 730.62,586.0 731.01,586.2 731.41,586.5 731.81,587.9 732.21,587.1 732.61,586.6 733.01,590.4 733.41,588.3 733.81,585.8 734.21,587.4 734.61,587.3 735.01,587.6 735.41,586.3 735.81,586.8 736.21,589.7 736.61,587.4 737.01,588.6 737.41,589.5 737.81,589.6 738.21,587.3 738.61,585.0 739.01,587.7 739.41,587.7 739.80,589.0 740.20,587.4 740.60,587.4 741.00,587.4 741.40,586.7 741.80,586.7 742.20,586.5 742.60,587.6 743.00,587.7 743.40,590.7 743.80,587.6 744.20,587.8 744.60,586.9 745.00,588.4 745.40,587.3 745.80,589.0 746.20,588.8 746.60,587.3 747.00,589.2 747.40,590.1 747.80,588.6 748.20,589.0 748.60,589.7 748.99,588.2 749.39,586.3 749.79,588.3 750.19,589.4 750.59,590.4 750.99,589.3 751.39,586.9 751.79,587.8 752.19,587.1 752.59,590.1 752.99,586.6 753.39,586.9 753.79,587.9 754.19,587.7 754.59,585.9 754.99,589.4 755.39,588.8 755.79,587.4 756.19,589.6 756.59,587.7 756.99,587.4 757.38,585.8 757.78,586.2 758.18,586.7 758.58,587.8 758.98,590.2 759.38,590.1 759.78,585.9 760.18,590.4 760.58,586.7 760.98,586.5 761.38,590.5 761.78,586.2 762.18,590.1 762.58,587.3 762.98,586.9 763.38,588.7 763.78,589.4 764.18,586.3 764.58,586.9 764.98,587.3 765.38,587.0 765.78,587.8 766.17,589.9 766.57,587.7 766.97,586.0 767.37,589.6 767.77,588.3 768.17,588.6 768.57,586.0 768.97,586.6 769.37,588.3 769.77,586.4 770.17,587.3 770.57,587.3 770.97,587.1 771.37,589.9 771.77,586.2 772.17,588.0 772.57,588.9 772.97,590.4 773.37,590.5 773.77,589.0 774.17,589.0 774.57,588.6 774.97,587.5 775.36,588.1 775.76,588.5 776.16,589.4 776.56,589.5 776.96,585.0 777.36,588.1 777.76,586.0 778.16,589.6 778.56,588.3 778.96,588.0 779.36,587.3 779.76,590.5 780.16,586.1 780.56,586.4 780.96,585.9 781.36,587.1 781.76,588.6 782.16,590.3 782.56,587.7 782.96,590.1 783.36,590.0 783.75,587.8 784.15,586.8 784.55,590.0 784.95,590.0 785.35,590.6 785.75,587.4 786.15,588.3 786.55,586.6 786.95,586.7 787.35,589.0 787.75,586.9 788.15,585.9 788.55,588.6 788.95,585.9 789.35,586.4 789.75,589.4 790.15,590.4 790.55,586.0 790.95,590.0 791.35,590.4 791.75,590.3 792.15,586.7 792.54,586.5 792.94,588.5 793.34,586.8 793.74,588.7 794.14,588.5 794.54,590.1 794.94,588.6 795.34,586.6 795.74,586.4 796.14,589.9 796.54,586.6 796.94,587.5 797.34,590.5 797.74,588.6 798.14,586.1 798.54,589.4 798.94,588.0 799.34,586.1 799.74,588.8 800.14,586.7 800.54,588.1 800.94,589.5 801.34,586.2 801.73,589.3 802.13,589.3 802.53,589.4 802.93,587.4 803.33,589.0 803.73,587.8 804.13,587.5 804.53,590.2 804.93,587.7 805.33,590.2 805.73,590.0 806.13,589.4 806.53,586.1 806.93,586.6 807.33,587.7 807.73,587.6 808.13,589.1 808.53,587.9 808.93,587.5 809.33,587.2 809.73,590.6 810.12,588.6 810.52,588.0 810.92,587.7 811.32,587.4 811.72,588.0 812.12,590.1 812.52,586.3 812.92,589.3 813.32,588.2 813.72,589.8 814.12,590.3 814.52,589.3 814.92,589.8 815.32,588.1 815.72,587.5 816.12,587.6 816.52,587.7 816.92,588.4 817.32,589.7 817.72,587.8 818.12,587.7 818.52,586.9 818.91,588.9 819.31,587.1 819.71,589.8 820.11,585.9 820.51,585.8 820.91,588.8 821.31,590.6 821.71,587.2 822.11,586.9 822.51,587.1 822.91,587.6 823.31,587.4 823.71,590.3 824.11,587.2 824.51,585.9 824.91,589.9 825.31,588.9 825.71,586.3 826.11,587.2 826.51,588.2 826.91,590.3 827.31,590.7 827.71,586.2 828.10,587.6 828.50,589.9 828.90,588.5 829.30,590.2 829.70,588.4 830.10,586.8 830.50,589.1 830.90,587.8 831.30,588.0 831.70,590.5 832.10,588.3 832.50,589.9 832.90,588.6 833.30,587.7 833.70,587.7 834.10,586.8 834.50,589.5 834.90,588.0 835.30,589.5 835.70,588.6 836.10,589.5 836.50,589.4 836.89,588.6 837.29,587.9 837.69,588.0 838.09,586.0 838.49,590.3 838.89,590.6 839.29,586.7 839.69,590.6 840.09,588.3 840.49,590.6 840.89,590.7 841.29,589.2 841.69,585.9 842.09,586.5 842.49,586.2 842.89,589.5 843.29,588.4 843.69,586.2 844.09,589.7 844.49,586.7 844.89,587.8 845.28,589.5 845.68,588.2 846.08,589.6 846.48,587.8 846.88,585.8 847.28,585.8 847.68,588.2 848.08,590.3 848.48,590.2 848.88,590.3 849.28,589.7 849.68,586.9 850.08,590.0 850.48,585.8 850.88,588.5 851.28,587.3 851.68,586.8 852.08,586.9 852.48,590.1 852.88,589.8 853.28,589.3 853.68,588.6 854.08,586.1 854.47,586.9 854.87,588.7 855.27,587.5 855.67,587.3 856.07,588.1 856.47,588.8 856.87,590.7 857.27,588.2 857.67,587.1 858.07,588.7 858.47,587.8 858.87,587.3 859.27,586.9 859.67,590.2 860.07,589.5 860.47,586.0 860.87,587.1 861.27,587.6 861.67,589.6 862.07,590.6 862.47,586.0 862.87,590.7 863.26,587.4 863.66,586.9 864.06,589.6 864.46,586.9 864.86,588.2 865.26,587.7 865.66,589.8 866.06,589.8 866.46,587.8 866.86,587.6 867.26,587.5 867.66,586.6 868.06,586.4 868.46,586.6 868.86,587.3 869.26,589.5 869.66,587.5 870.06,587.7 870.46,587.7 870.86,589.5 871.26,587.3 871.65,589.1 872.05,588.5 872.45,587.6 872.85,586.9 873.25,587.1 873.65,588.5 874.05,587.5 874.45,586.6 874.85,588.0 875.25,587.6 875.65,588.4 876.05,590.0 876.45,585.9 876.85,587.0 877.25,590.4 877.65,586.1 878.05,586.7 878.45,589.8 878.85,590.2 879.25,588.3 879.65,589.3 880.05,590.0 880.45,590.4 880.84,587.8 881.24,588.6 881.64,587.2 882.04,586.4 882.44,589.3 882.84,587.8 883.24,587.4 883.64,586.1 884.04,589.7 884.44,587.6 884.84,588.0 885.24,588.4 885.64,589.0 886.04,590.0 886.44,588.4 886.84,587.1 887.24,586.3 887.64,587.5 888.04,586.3 888.44,586.5 888.84,586.0 889.24,589.8 889.63,589.9 890.03,588.8 890.43,588.9 890.83,588.7 891.23,586.8 891.63,587.2 892.03,585.9 892.43,587.2 892.83,586.2 893.23,588.7 893.63,590.4 894.03,589.1 894.43,590.7 894.83,590.3 895.23,588.3 895.63,587.6 896.03,587.4 896.43,587.7 896.83,586.0 897.23,589.4 897.63,586.0 898.02,589.5 898.42,587.4 898.82,590.3 899.22,587.2 899.62,587.3 900.02,590.3 900.42,589.8 900.82,589.8 901.22,588.4 901.62,587.0 902.02,590.2 902.42,590.3 902.82,588.3 903.22,586.8 903.62,588.1 904.02,590.6 904.42,588.8 904.82,590.2 905.22,588.1 905.62,590.3 906.02,586.1 906.42,588.0 906.82,587.8 907.21,589.9 907.61,588.5 908.01,590.5 908.41,590.2 908.81,588.4 909.21,586.9 909.61,589.3 910.01,590.7 910.41,590.5 910.81,586.4 911.21,586.1 911.61,587.4 912.01,588.6 912.41,588.7 912.81,589.0 913.21,589.7 913.61,588.6 914.01,590.4 914.41,587.2 914.81,588.4 915.21,587.7 915.61,586.9 916.00,588.8 916.40,585.3 916.80,589.4 917.20,587.1 917.60,588.2 918.00,590.3 918.40,586.1 918.80,588.3 919.20,588.7 919.60,589.7 920.00,588.2" fill="none" stroke="#78b25a" stroke-width="0.6"/>
<line x1="41" y1="591.2" x2="920" y2="591.2" stroke="#cdb57a" stroke-width="1.3" opacity="0.9"/>
<line x1="41" y1="592.5" x2="920" y2="592.5" stroke="#b0b0b0" stroke-width="1"/>
<polyline points="41.0,519.6 42.0,522.4 43.0,526.4 44.5,525.1 46.0,525.6 48.0,523.9 50.0,523.2 52.0,522.6 54.0,521.5 56.0,522.1 60.0,522.4 66.0,522.6 75.0,523.0 85.0,523.6 95.0,523.9 110.0,523.4 130.0,523.2 150.0,523.2 152.6,523.2 155.1,523.2 157.7,523.2 160.3,523.2 162.8,523.2 165.4,523.2 168.0,523.2 170.5,523.2 173.1,523.2 175.7,523.2 178.2,523.2 180.8,523.2 183.4,523.2 185.9,523.2 188.5,523.2 191.1,523.2 193.6,523.2 196.2,523.2 198.8,523.2 201.3,523.2 203.9,523.2 206.5,523.2 209.0,523.2 211.6,523.2 214.2,523.2 216.7,523.2 219.3,523.2 221.9,523.2 224.4,523.2 227.0,523.2 229.6,523.3 232.1,523.3 234.7,523.3 237.3,523.3 239.8,523.3 242.4,523.3 245.0,523.3 247.5,523.3 250.1,523.3 252.7,523.4 255.2,523.4 257.8,523.4 260.4,523.4 262.9,523.4 265.5,523.4 268.1,523.4 270.6,523.4 273.2,523.4 275.8,523.5 278.3,523.5 280.9,523.5 283.5,523.5 286.0,523.5 288.6,523.5 291.2,523.5 293.7,523.5 296.3,523.6 298.9,523.6 301.4,523.6 304.0,523.6 306.6,523.6 309.1,523.6 311.7,523.6 314.3,523.6 316.8,523.6 319.4,523.7 322.0,523.7 324.5,523.7 327.1,523.7 329.7,523.7 332.2,523.7 334.8,523.7 337.4,523.7 339.9,523.8 342.5,523.8 345.1,523.8 347.6,523.8 350.2,523.8 352.8,523.8 355.3,523.8 357.9,523.8 360.5,523.8 363.0,523.9 365.6,523.9 368.2,523.9 370.7,523.9 373.3,523.9 375.9,523.9 378.4,523.9 381.0,523.9 383.6,523.9 386.1,524.0 388.7,524.0 391.3,524.0 393.8,524.0 396.4,524.0 399.0,524.0 401.5,524.0 404.1,524.0 406.7,524.1 409.2,524.1 411.8,524.1 414.4,524.1 416.9,524.1 419.5,524.1 422.1,524.1 424.6,524.1 427.2,524.1 429.8,524.2 432.3,524.2 434.9,524.2 437.5,524.2 440.0,524.2 442.6,524.2 445.2,524.2 447.7,524.2 450.3,524.2 452.9,524.3 455.4,524.3 458.0,524.3 460.6,524.3 463.1,524.3 465.7,524.3 468.3,524.3 470.8,524.3 473.4,524.4 476.0,524.4 478.5,524.4 481.1,524.4 483.7,524.4 486.2,524.4 488.8,524.4 491.4,524.4 493.9,524.4 496.5,524.5 499.1,524.5 501.6,524.5 504.2,524.5 506.8,524.5 509.3,524.5 511.9,524.5 514.5,524.5 517.0,524.5 519.6,524.6 522.2,524.6 524.7,524.6 527.3,524.6 529.9,524.6 532.4,524.6 535.0,524.6 537.6,524.6 540.1,524.7 542.7,524.7 545.3,524.7 547.8,524.7 550.4,524.7 553.0,524.7 555.5,524.7 558.1,524.7 560.7,524.7 563.2,524.8 565.8,524.8 568.4,524.8 570.9,524.8 573.5,524.8 576.1,524.8 578.6,524.8 581.2,524.8 583.8,524.9 586.3,524.9 588.9,524.9 591.5,524.9 594.0,524.9 596.6,524.9 599.2,524.9 601.7,524.9 604.3,524.9 606.9,524.9 609.4,524.9 612.0,524.9 614.6,524.9 617.1,524.9 619.7,524.9 622.3,524.9 624.8,524.9 627.4,524.9 630.0,524.9 632.5,524.9 635.1,524.9 637.7,524.9 640.2,524.9 642.8,524.9 645.4,524.9 647.9,524.9 650.5,524.9 653.1,524.9 655.6,524.9 658.2,524.9 660.8,524.9 663.3,524.9 665.9,524.9 668.5,524.9 671.0,524.9 673.6,524.9 676.2,524.9 678.7,524.9 681.3,524.9 683.9,524.9 686.4,524.9 689.0,524.9 691.6,524.9 694.1,524.9 696.7,524.9 699.3,524.9 701.8,524.9 704.4,524.9 707.0,524.9 709.5,524.9 712.1,524.9 714.7,524.9 717.2,524.9 719.8,524.9 722.4,524.9 724.9,524.9 727.5,524.9 730.1,524.9 732.6,524.9 735.2,524.9 737.8,524.9 740.3,524.9 742.9,524.9 745.5,524.9 748.0,524.9 750.6,524.9 753.2,524.9 755.7,524.9 758.3,524.9 760.9,524.9 763.4,524.9 766.0,524.9 768.6,524.9 771.1,524.9 773.7,524.9 776.3,524.9 778.8,524.9 781.4,524.9 784.0,524.9 786.5,524.9 789.1,524.9 791.7,524.9 794.2,524.9 796.8,524.9 799.4,524.9 801.9,524.9 804.5,524.9 807.1,524.9 809.6,524.9 812.2,524.9 814.8,524.9 817.3,524.9 819.9,524.9 822.5,524.9 825.0,524.9 827.6,524.9 830.2,524.9 832.7,524.9 835.3,524.9 837.9,524.9 840.4,524.9 843.0,524.9 845.6,524.9 848.1,524.9 850.7,524.9 853.3,524.9 855.8,524.9 858.4,524.9 861.0,524.9 863.5,524.9 866.1,524.9 868.7,524.9 871.2,524.9 873.8,524.9 876.4,524.9 878.9,524.9 881.5,524.9 884.1,524.9 886.6,524.9 889.2,524.9 891.8,524.9 894.3,524.9 896.9,524.9 899.5,524.9 902.0,524.9 904.6,524.9 907.2,524.9 909.7,524.9 912.3,524.9 914.9,524.9 917.4,524.9 920.0,524.9" fill="none" stroke="#6ab2a5" stroke-width="1.1"/>
<rect x="41" y="461.3" width="878" height="5.4" fill="#b13ec1"/>
<circle cx="41.5" cy="461.7" r="1.2" fill="#ab38bb"/>
<rect x="41.5" y="464.3" width="1.1" height="1.1" fill="#cf86d8"/>
<circle cx="42.7" cy="461.5" r="1.2" fill="#ab38bb"/>
<circle cx="42.7" cy="468.2" r="1.1" fill="#b13ec1"/>
<circle cx="44.5" cy="461.8" r="1.2" fill="#ab38bb"/>
<circle cx="46.4" cy="461.9" r="1.2" fill="#ab38bb"/>
<rect x="46.4" y="464.0" width="1.1" height="1.1" fill="#cf86d8"/>
<circle cx="46.4" cy="468.1" r="1.1" fill="#b13ec1"/>
<circle cx="47.7" cy="460.9" r="1.2" fill="#ab38bb"/>
<rect x="47.7" y="463.4" width="1.1" height="1.1" fill="#cf86d8"/>
<circle cx="48.7" cy="461.0" r="1.2" fill="#ab38bb"/>
<circle cx="50.1" cy="466.1" r="1.2" fill="#ab38bb"/>
<rect x="50.1" y="460.7" width="1.3" height="1.2" fill="#e4bfe9"/>
<circle cx="51.1" cy="466.6" r="1.2" fill="#ab38bb"/>
<rect x="51.1" y="464.3" width="1.1" height="1.1" fill="#cf86d8"/>
<circle cx="53.2" cy="465.7" r="1.2" fill="#ab38bb"/>
<circle cx="54.6" cy="466.7" r="1.2" fill="#ab38bb"/>
<circle cx="56.7" cy="465.6" r="1.2" fill="#ab38bb"/>
<circle cx="58.5" cy="465.8" r="1.2" fill="#ab38bb"/>
<circle cx="60.6" cy="461.3" r="1.2" fill="#ab38bb"/>
<circle cx="61.7" cy="466.5" r="1.2" fill="#ab38bb"/>
<rect x="61.7" y="461.0" width="1.3" height="1.2" fill="#e4bfe9"/>
<circle cx="63.1" cy="461.5" r="1.2" fill="#ab38bb"/>
<circle cx="63.1" cy="468.0" r="1.1" fill="#b13ec1"/>
<circle cx="64.7" cy="466.0" r="1.2" fill="#ab38bb"/>
<circle cx="66.4" cy="461.2" r="1.2" fill="#ab38bb"/>
<circle cx="68.1" cy="466.7" r="1.2" fill="#ab38bb"/>
<circle cx="69.8" cy="461.1" r="1.2" fill="#ab38bb"/>
<circle cx="71.4" cy="466.3" r="1.2" fill="#ab38bb"/>
<rect x="71.4" y="463.0" width="1.1" height="1.1" fill="#cf86d8"/>
<circle cx="72.7" cy="467.0" r="1.2" fill="#ab38bb"/>
<circle cx="74.8" cy="465.7" r="1.2" fill="#ab38bb"/>
<rect x="74.8" y="461.4" width="1.3" height="1.2" fill="#e4bfe9"/>
<circle cx="75.8" cy="461.0" r="1.2" fill="#ab38bb"/>
<circle cx="76.8" cy="461.9" r="1.2" fill="#ab38bb"/>
<circle cx="77.9" cy="466.2" r="1.2" fill="#ab38bb"/>
<circle cx="78.9" cy="466.3" r="1.2" fill="#ab38bb"/>
<circle cx="80.3" cy="465.8" r="1.2" fill="#ab38bb"/>
<rect x="80.3" y="461.0" width="1.3" height="1.2" fill="#e4bfe9"/>
<circle cx="80.3" cy="468.9" r="1.1" fill="#b13ec1"/>
<circle cx="81.3" cy="466.2" r="1.2" fill="#ab38bb"/>
<rect x="81.3" y="463.7" width="1.1" height="1.1" fill="#cf86d8"/>
<circle cx="81.3" cy="468.0" r="1.1" fill="#b13ec1"/>
<circle cx="82.9" cy="465.9" r="1.2" fill="#ab38bb"/>
<circle cx="84.5" cy="461.1" r="1.2" fill="#ab38bb"/>
<rect x="84.5" y="461.4" width="1.3" height="1.2" fill="#e4bfe9"/>
<circle cx="85.5" cy="461.5" r="1.2" fill="#ab38bb"/>
<circle cx="87.3" cy="461.6" r="1.2" fill="#ab38bb"/>
<rect x="87.3" y="464.0" width="1.1" height="1.1" fill="#cf86d8"/>
<circle cx="89.2" cy="465.9" r="1.2" fill="#ab38bb"/>
<circle cx="90.4" cy="466.2" r="1.2" fill="#ab38bb"/>
<rect x="90.4" y="460.6" width="1.3" height="1.2" fill="#e4bfe9"/>
<circle cx="90.4" cy="469.3" r="1.1" fill="#b13ec1"/>
<circle cx="92.6" cy="461.1" r="1.2" fill="#ab38bb"/>
<circle cx="94.5" cy="462.0" r="1.2" fill="#ab38bb"/>
<circle cx="96.6" cy="466.3" r="1.2" fill="#ab38bb"/>
<circle cx="98.0" cy="461.9" r="1.2" fill="#ab38bb"/>
<circle cx="98.9" cy="461.5" r="1.2" fill="#ab38bb"/>
<circle cx="100.7" cy="466.6" r="1.2" fill="#ab38bb"/>
<circle cx="101.8" cy="466.0" r="1.2" fill="#ab38bb"/>
<rect x="101.8" y="463.2" width="1.1" height="1.1" fill="#cf86d8"/>
<circle cx="103.3" cy="461.8" r="1.2" fill="#ab38bb"/>
<circle cx="104.9" cy="461.5" r="1.2" fill="#ab38bb"/>
<circle cx="106.9" cy="466.7" r="1.2" fill="#ab38bb"/>
<circle cx="106.9" cy="468.2" r="1.1" fill="#b13ec1"/>
<circle cx="108.1" cy="462.0" r="1.2" fill="#ab38bb"/>
<circle cx="109.3" cy="462.0" r="1.2" fill="#ab38bb"/>
<rect x="109.3" y="460.6" width="1.3" height="1.2" fill="#e4bfe9"/>
<circle cx="109.3" cy="468.6" r="1.1" fill="#b13ec1"/>
<circle cx="110.8" cy="461.3" r="1.2" fill="#ab38bb"/>
<rect x="110.8" y="463.9" width="1.1" height="1.1" fill="#cf86d8"/>
<circle cx="113.0" cy="461.8" r="1.2" fill="#ab38bb"/>
<circle cx="114.7" cy="465.7" r="1.2" fill="#ab38bb"/>
<circle cx="116.2" cy="462.2" r="1.2" fill="#ab38bb"/>
<rect x="116.2" y="461.4" width="1.3" height="1.2" fill="#e4bfe9"/>
<circle cx="117.6" cy="461.5" r="1.2" fill="#ab38bb"/>
<circle cx="119.6" cy="461.6" r="1.2" fill="#ab38bb"/>
<circle cx="120.6" cy="461.2" r="1.2" fill="#ab38bb"/>
<rect x="120.6" y="463.1" width="1.1" height="1.1" fill="#cf86d8"/>
<circle cx="122.2" cy="461.7" r="1.2" fill="#ab38bb"/>
<circle cx="123.3" cy="461.7" r="1.2" fill="#ab38bb"/>
<circle cx="124.3" cy="465.9" r="1.2" fill="#ab38bb"/>
<circle cx="125.3" cy="461.2" r="1.2" fill="#ab38bb"/>
<circle cx="127.0" cy="461.1" r="1.2" fill="#ab38bb"/>
<rect x="127.0" y="461.4" width="1.3" height="1.2" fill="#e4bfe9"/>
<circle cx="129.1" cy="461.4" r="1.2" fill="#ab38bb"/>
<circle cx="129.1" cy="467.8" r="1.1" fill="#b13ec1"/>
<circle cx="130.4" cy="461.5" r="1.2" fill="#ab38bb"/>
<circle cx="131.8" cy="465.7" r="1.2" fill="#ab38bb"/>
<rect x="131.8" y="462.8" width="1.1" height="1.1" fill="#cf86d8"/>
<circle cx="131.8" cy="468.4" r="1.1" fill="#b13ec1"/>
<circle cx="133.2" cy="461.2" r="1.2" fill="#ab38bb"/>
<circle cx="134.2" cy="465.6" r="1.2" fill="#ab38bb"/>
<circle cx="135.1" cy="466.1" r="1.2" fill="#ab38bb"/>
<circle cx="136.0" cy="461.6" r="1.2" fill="#ab38bb"/>
<circle cx="137.5" cy="461.2" r="1.2" fill="#ab38bb"/>
<circle cx="139.6" cy="462.2" r="1.2" fill="#ab38bb"/>
<circle cx="140.9" cy="461.1" r="1.2" fill="#ab38bb"/>
<rect x="140.9" y="460.5" width="1.3" height="1.2" fill="#e4bfe9"/>
<rect x="140.9" y="464.3" width="1.1" height="1.1" fill="#cf86d8"/>
<circle cx="143.1" cy="461.8" r="1.2" fill="#ab38bb"/>
<circle cx="144.9" cy="461.5" r="1.2" fill="#ab38bb"/>
<circle cx="146.3" cy="465.7" r="1.2" fill="#ab38bb"/>
<circle cx="148.2" cy="467.0" r="1.2" fill="#ab38bb"/>
<circle cx="149.9" cy="466.8" r="1.2" fill="#ab38bb"/>
<circle cx="151.2" cy="465.7" r="1.2" fill="#ab38bb"/>
<circle cx="153.2" cy="466.8" r="1.2" fill="#ab38bb"/>
<circle cx="154.9" cy="466.1" r="1.2" fill="#ab38bb"/>
<circle cx="154.9" cy="468.8" r="1.1" fill="#b13ec1"/>
<circle cx="156.7" cy="465.6" r="1.2" fill="#ab38bb"/>
<circle cx="158.2" cy="465.7" r="1.2" fill="#ab38bb"/>
<circle cx="159.9" cy="465.9" r="1.2" fill="#ab38bb"/>
<rect x="159.9" y="461.1" width="1.3" height="1.2" fill="#e4bfe9"/>
<circle cx="161.5" cy="467.0" r="1.2" fill="#ab38bb"/>
<circle cx="161.5" cy="468.5" r="1.1" fill="#b13ec1"/>
<circle cx="163.1" cy="466.9" r="1.2" fill="#ab38bb"/>
<rect x="163.1" y="461.4" width="1.3" height="1.2" fill="#e4bfe9"/>
<rect x="163.1" y="463.2" width="1.1" height="1.1" fill="#cf86d8"/>
<circle cx="164.1" cy="466.9" r="1.2" fill="#ab38bb"/>
<rect x="164.1" y="461.2" width="1.3" height="1.2" fill="#e4bfe9"/>
<circle cx="165.6" cy="461.4" r="1.2" fill="#ab38bb"/>
<circle cx="167.6" cy="461.0" r="1.2" fill="#ab38bb"/>
<rect x="167.6" y="464.4" width="1.1" height="1.1" fill="#cf86d8"/>
<circle cx="168.8" cy="461.8" r="1.2" fill="#ab38bb"/>
<circle cx="170.3" cy="466.4" r="1.2" fill="#ab38bb"/>
<circle cx="172.5" cy="466.9" r="1.2" fill="#ab38bb"/>
<circle cx="174.5" cy="466.1" r="1.2" fill="#ab38bb"/>
<circle cx="175.8" cy="461.0" r="1.2" fill="#ab38bb"/>
<circle cx="177.1" cy="461.8" r="1.2" fill="#ab38bb"/>
<circle cx="178.8" cy="461.8" r="1.2" fill="#ab38bb"/>
<circle cx="180.5" cy="465.6" r="1.2" fill="#ab38bb"/>
<rect x="180.5" y="461.0" width="1.3" height="1.2" fill="#e4bfe9"/>
<circle cx="182.3" cy="465.8" r="1.2" fill="#ab38bb"/>
<circle cx="183.5" cy="461.8" r="1.2" fill="#ab38bb"/>
<circle cx="185.2" cy="461.2" r="1.2" fill="#ab38bb"/>
<rect x="185.2" y="461.0" width="1.3" height="1.2" fill="#e4bfe9"/>
<rect x="185.2" y="463.0" width="1.1" height="1.1" fill="#cf86d8"/>
<circle cx="186.5" cy="461.5" r="1.2" fill="#ab38bb"/>
<rect x="186.5" y="460.5" width="1.3" height="1.2" fill="#e4bfe9"/>
<circle cx="188.4" cy="461.6" r="1.2" fill="#ab38bb"/>
<rect x="188.4" y="460.6" width="1.3" height="1.2" fill="#e4bfe9"/>
<circle cx="190.5" cy="466.0" r="1.2" fill="#ab38bb"/>
<circle cx="192.5" cy="466.2" r="1.2" fill="#ab38bb"/>
<rect x="192.5" y="463.6" width="1.1" height="1.1" fill="#cf86d8"/>
<circle cx="194.3" cy="461.5" r="1.2" fill="#ab38bb"/>
<circle cx="195.7" cy="461.0" r="1.2" fill="#ab38bb"/>
<rect x="195.7" y="460.8" width="1.3" height="1.2" fill="#e4bfe9"/>
<circle cx="197.5" cy="461.9" r="1.2" fill="#ab38bb"/>
<circle cx="199.4" cy="465.7" r="1.2" fill="#ab38bb"/>
<circle cx="201.2" cy="462.0" r="1.2" fill="#ab38bb"/>
<circle cx="202.4" cy="466.7" r="1.2" fill="#ab38bb"/>
<circle cx="204.1" cy="461.1" r="1.2" fill="#ab38bb"/>
<circle cx="204.1" cy="468.5" r="1.1" fill="#b13ec1"/>
<circle cx="205.7" cy="465.7" r="1.2" fill="#ab38bb"/>
<circle cx="207.4" cy="461.7" r="1.2" fill="#ab38bb"/>
<rect x="207.4" y="461.2" width="1.3" height="1.2" fill="#e4bfe9"/>
<circle cx="209.1" cy="465.7" r="1.2" fill="#ab38bb"/>
<circle cx="209.1" cy="468.1" r="1.1" fill="#b13ec1"/>
<circle cx="210.3" cy="462.0" r="1.2" fill="#ab38bb"/>
<rect x="210.3" y="463.9" width="1.1" height="1.1" fill="#cf86d8"/>
<circle cx="211.4" cy="466.4" r="1.2" fill="#ab38bb"/>
<circle cx="211.4" cy="468.6" r="1.1" fill="#b13ec1"/>
<circle cx="212.9" cy="466.4" r="1.2" fill="#ab38bb"/>
<circle cx="214.7" cy="465.8" r="1.2" fill="#ab38bb"/>
<circle cx="216.2" cy="461.5" r="1.2" fill="#ab38bb"/>
<circle cx="217.7" cy="461.7" r="1.2" fill="#ab38bb"/>
<circle cx="219.4" cy="462.1" r="1.2" fill="#ab38bb"/>
<circle cx="220.9" cy="462.2" r="1.2" fill="#ab38bb"/>
<circle cx="221.9" cy="466.2" r="1.2" fill="#ab38bb"/>
<circle cx="221.9" cy="468.4" r="1.1" fill="#b13ec1"/>
<circle cx="223.7" cy="466.8" r="1.2" fill="#ab38bb"/>
<circle cx="224.6" cy="461.2" r="1.2" fill="#ab38bb"/>
<circle cx="226.5" cy="461.7" r="1.2" fill="#ab38bb"/>
<circle cx="227.9" cy="460.9" r="1.2" fill="#ab38bb"/>
<circle cx="229.0" cy="466.2" r="1.2" fill="#ab38bb"/>
<rect x="229.0" y="461.1" width="1.3" height="1.2" fill="#e4bfe9"/>
<circle cx="230.8" cy="466.1" r="1.2" fill="#ab38bb"/>
<circle cx="232.7" cy="466.3" r="1.2" fill="#ab38bb"/>
<rect x="232.7" y="463.4" width="1.1" height="1.1" fill="#cf86d8"/>
<circle cx="233.9" cy="466.9" r="1.2" fill="#ab38bb"/>
<circle cx="235.9" cy="466.9" r="1.2" fill="#ab38bb"/>
<circle cx="237.7" cy="466.5" r="1.2" fill="#ab38bb"/>
<circle cx="239.5" cy="465.7" r="1.2" fill="#ab38bb"/>
<rect x="239.5" y="463.7" width="1.1" height="1.1" fill="#cf86d8"/>
<circle cx="240.6" cy="466.7" r="1.2" fill="#ab38bb"/>
<circle cx="242.0" cy="461.5" r="1.2" fill="#ab38bb"/>
<rect x="242.0" y="461.1" width="1.3" height="1.2" fill="#e4bfe9"/>
<rect x="242.0" y="464.1" width="1.1" height="1.1" fill="#cf86d8"/>
<circle cx="243.6" cy="466.5" r="1.2" fill="#ab38bb"/>
<circle cx="245.2" cy="466.3" r="1.2" fill="#ab38bb"/>
<circle cx="247.1" cy="461.5" r="1.2" fill="#ab38bb"/>
<rect x="247.1" y="462.9" width="1.1" height="1.1" fill="#cf86d8"/>
<circle cx="247.1" cy="469.2" r="1.1" fill="#b13ec1"/>
<circle cx="248.8" cy="461.6" r="1.2" fill="#ab38bb"/>
<circle cx="250.2" cy="465.8" r="1.2" fill="#ab38bb"/>
<rect x="250.2" y="463.9" width="1.1" height="1.1" fill="#cf86d8"/>
<circle cx="252.0" cy="461.6" r="1.2" fill="#ab38bb"/>
<circle cx="254.0" cy="465.9" r="1.2" fill="#ab38bb"/>
<rect x="254.0" y="463.2" width="1.1" height="1.1" fill="#cf86d8"/>
<circle cx="255.6" cy="466.0" r="1.2" fill="#ab38bb"/>
<rect x="255.6" y="463.4" width="1.1" height="1.1" fill="#cf86d8"/>
<circle cx="257.7" cy="461.1" r="1.2" fill="#ab38bb"/>
<circle cx="259.0" cy="461.4" r="1.2" fill="#ab38bb"/>
<circle cx="260.0" cy="462.2" r="1.2" fill="#ab38bb"/>
<rect x="260.0" y="461.0" width="1.3" height="1.2" fill="#e4bfe9"/>
<circle cx="262.1" cy="466.2" r="1.2" fill="#ab38bb"/>
<circle cx="264.1" cy="461.0" r="1.2" fill="#ab38bb"/>
<circle cx="266.0" cy="461.4" r="1.2" fill="#ab38bb"/>
<circle cx="266.0" cy="469.3" r="1.1" fill="#b13ec1"/>
<circle cx="267.2" cy="466.0" r="1.2" fill="#ab38bb"/>
<circle cx="268.3" cy="465.9" r="1.2" fill="#ab38bb"/>
<circle cx="270.3" cy="465.8" r="1.2" fill="#ab38bb"/>
<circle cx="272.5" cy="466.3" r="1.2" fill="#ab38bb"/>
<circle cx="273.8" cy="460.9" r="1.2" fill="#ab38bb"/>
<circle cx="273.8" cy="468.8" r="1.1" fill="#b13ec1"/>
<circle cx="275.1" cy="466.8" r="1.2" fill="#ab38bb"/>
<circle cx="276.8" cy="461.8" r="1.2" fill="#ab38bb"/>
<circle cx="278.6" cy="461.3" r="1.2" fill="#ab38bb"/>
<rect x="278.6" y="461.2" width="1.3" height="1.2" fill="#e4bfe9"/>
<circle cx="278.6" cy="467.8" r="1.1" fill="#b13ec1"/>
<circle cx="280.2" cy="466.4" r="1.2" fill="#ab38bb"/>
<circle cx="282.1" cy="466.8" r="1.2" fill="#ab38bb"/>
<circle cx="283.4" cy="462.2" r="1.2" fill="#ab38bb"/>
<circle cx="283.4" cy="468.5" r="1.1" fill="#b13ec1"/>
<circle cx="284.4" cy="461.3" r="1.2" fill="#ab38bb"/>
<circle cx="286.0" cy="466.9" r="1.2" fill="#ab38bb"/>
<rect x="286.0" y="464.3" width="1.1" height="1.1" fill="#cf86d8"/>
<circle cx="287.9" cy="466.5" r="1.2" fill="#ab38bb"/>
<rect x="287.9" y="461.4" width="1.3" height="1.2" fill="#e4bfe9"/>
<circle cx="289.5" cy="466.6" r="1.2" fill="#ab38bb"/>
<circle cx="291.5" cy="465.9" r="1.2" fill="#ab38bb"/>
<circle cx="292.8" cy="461.2" r="1.2" fill="#ab38bb"/>
<circle cx="294.9" cy="466.2" r="1.2" fill="#ab38bb"/>
<circle cx="296.5" cy="461.9" r="1.2" fill="#ab38bb"/>
<circle cx="296.5" cy="469.0" r="1.1" fill="#b13ec1"/>
<circle cx="298.5" cy="461.9" r="1.2" fill="#ab38bb"/>
<circle cx="299.9" cy="462.1" r="1.2" fill="#ab38bb"/>
<circle cx="302.0" cy="466.7" r="1.2" fill="#ab38bb"/>
<rect x="302.0" y="463.5" width="1.1" height="1.1" fill="#cf86d8"/>
<circle cx="302.0" cy="469.3" r="1.1" fill="#b13ec1"/>
<circle cx="304.1" cy="465.6" r="1.2" fill="#ab38bb"/>
<rect x="304.1" y="463.0" width="1.1" height="1.1" fill="#cf86d8"/>
<circle cx="305.9" cy="466.7" r="1.2" fill="#ab38bb"/>
<circle cx="307.5" cy="461.7" r="1.2" fill="#ab38bb"/>
<circle cx="308.7" cy="461.6" r="1.2" fill="#ab38bb"/>
<rect x="308.7" y="463.7" width="1.1" height="1.1" fill="#cf86d8"/>
<circle cx="309.9" cy="461.1" r="1.2" fill="#ab38bb"/>
<circle cx="311.4" cy="465.8" r="1.2" fill="#ab38bb"/>
<circle cx="313.0" cy="466.5" r="1.2" fill="#ab38bb"/>
<circle cx="314.3" cy="466.4" r="1.2" fill="#ab38bb"/>
<rect x="314.3" y="460.9" width="1.3" height="1.2" fill="#e4bfe9"/>
<circle cx="315.2" cy="462.2" r="1.2" fill="#ab38bb"/>
<circle cx="316.6" cy="460.9" r="1.2" fill="#ab38bb"/>
<circle cx="318.2" cy="466.2" r="1.2" fill="#ab38bb"/>
<circle cx="319.4" cy="466.3" r="1.2" fill="#ab38bb"/>
<circle cx="321.6" cy="466.8" r="1.2" fill="#ab38bb"/>
<circle cx="321.6" cy="468.9" r="1.1" fill="#b13ec1"/>
<circle cx="323.6" cy="461.4" r="1.2" fill="#ab38bb"/>
<circle cx="324.7" cy="461.6" r="1.2" fill="#ab38bb"/>
<rect x="324.7" y="464.1" width="1.1" height="1.1" fill="#cf86d8"/>
<circle cx="326.4" cy="466.4" r="1.2" fill="#ab38bb"/>
<circle cx="328.5" cy="460.9" r="1.2" fill="#ab38bb"/>
<circle cx="329.6" cy="465.6" r="1.2" fill="#ab38bb"/>
<circle cx="331.2" cy="466.5" r="1.2" fill="#ab38bb"/>
<circle cx="331.2" cy="468.6" r="1.1" fill="#b13ec1"/>
<circle cx="333.2" cy="465.7" r="1.2" fill="#ab38bb"/>
<circle cx="334.5" cy="461.4" r="1.2" fill="#ab38bb"/>
<rect x="334.5" y="461.4" width="1.3" height="1.2" fill="#e4bfe9"/>
<circle cx="335.8" cy="466.5" r="1.2" fill="#ab38bb"/>
<rect x="335.8" y="460.8" width="1.3" height="1.2" fill="#e4bfe9"/>
<circle cx="336.8" cy="462.1" r="1.2" fill="#ab38bb"/>
<circle cx="337.9" cy="466.1" r="1.2" fill="#ab38bb"/>
<circle cx="339.1" cy="466.8" r="1.2" fill="#ab38bb"/>
<rect x="339.1" y="463.9" width="1.1" height="1.1" fill="#cf86d8"/>
<circle cx="340.8" cy="462.0" r="1.2" fill="#ab38bb"/>
<circle cx="342.3" cy="461.8" r="1.2" fill="#ab38bb"/>
<circle cx="344.5" cy="466.3" r="1.2" fill="#ab38bb"/>
<circle cx="346.3" cy="461.6" r="1.2" fill="#ab38bb"/>
<circle cx="348.5" cy="466.1" r="1.2" fill="#ab38bb"/>
<rect x="348.5" y="463.4" width="1.1" height="1.1" fill="#cf86d8"/>
<circle cx="349.9" cy="465.8" r="1.2" fill="#ab38bb"/>
<circle cx="351.5" cy="461.1" r="1.2" fill="#ab38bb"/>
<circle cx="353.0" cy="466.6" r="1.2" fill="#ab38bb"/>
<circle cx="354.0" cy="461.1" r="1.2" fill="#ab38bb"/>
<circle cx="355.0" cy="462.2" r="1.2" fill="#ab38bb"/>
<circle cx="355.0" cy="467.9" r="1.1" fill="#b13ec1"/>
<circle cx="356.1" cy="465.8" r="1.2" fill="#ab38bb"/>
<circle cx="357.3" cy="461.0" r="1.2" fill="#ab38bb"/>
<circle cx="358.7" cy="466.0" r="1.2" fill="#ab38bb"/>
<circle cx="360.1" cy="461.7" r="1.2" fill="#ab38bb"/>
<circle cx="361.6" cy="460.9" r="1.2" fill="#ab38bb"/>
<circle cx="362.6" cy="466.4" r="1.2" fill="#ab38bb"/>
<circle cx="364.4" cy="461.2" r="1.2" fill="#ab38bb"/>
<rect x="364.4" y="461.2" width="1.3" height="1.2" fill="#e4bfe9"/>
<circle cx="366.5" cy="466.7" r="1.2" fill="#ab38bb"/>
<circle cx="368.2" cy="466.2" r="1.2" fill="#ab38bb"/>
<circle cx="369.3" cy="466.5" r="1.2" fill="#ab38bb"/>
<circle cx="371.0" cy="466.9" r="1.2" fill="#ab38bb"/>
<circle cx="372.0" cy="461.0" r="1.2" fill="#ab38bb"/>
<rect x="372.0" y="460.9" width="1.3" height="1.2" fill="#e4bfe9"/>
<circle cx="374.0" cy="460.9" r="1.2" fill="#ab38bb"/>
<circle cx="375.1" cy="465.6" r="1.2" fill="#ab38bb"/>
<rect x="375.1" y="462.9" width="1.1" height="1.1" fill="#cf86d8"/>
<circle cx="377.1" cy="461.3" r="1.2" fill="#ab38bb"/>
<rect x="377.1" y="461.4" width="1.3" height="1.2" fill="#e4bfe9"/>
<rect x="377.1" y="463.4" width="1.1" height="1.1" fill="#cf86d8"/>
<circle cx="378.2" cy="461.5" r="1.2" fill="#ab38bb"/>
<circle cx="380.3" cy="461.6" r="1.2" fill="#ab38bb"/>
<circle cx="382.3" cy="466.2" r="1.2" fill="#ab38bb"/>
<circle cx="384.2" cy="461.9" r="1.2" fill="#ab38bb"/>
<circle cx="386.1" cy="462.0" r="1.2" fill="#ab38bb"/>
<circle cx="386.1" cy="468.1" r="1.1" fill="#b13ec1"/>
<circle cx="387.7" cy="466.8" r="1.2" fill="#ab38bb"/>
<circle cx="389.9" cy="461.8" r="1.2" fill="#ab38bb"/>
<rect x="389.9" y="460.7" width="1.3" height="1.2" fill="#e4bfe9"/>
<circle cx="391.0" cy="461.8" r="1.2" fill="#ab38bb"/>
<circle cx="393.0" cy="462.2" r="1.2" fill="#ab38bb"/>
<circle cx="394.6" cy="465.9" r="1.2" fill="#ab38bb"/>
<circle cx="396.1" cy="460.9" r="1.2" fill="#ab38bb"/>
<rect x="396.1" y="460.7" width="1.3" height="1.2" fill="#e4bfe9"/>
<circle cx="397.2" cy="461.4" r="1.2" fill="#ab38bb"/>
<circle cx="398.4" cy="465.7" r="1.2" fill="#ab38bb"/>
<circle cx="399.9" cy="466.3" r="1.2" fill="#ab38bb"/>
<rect x="399.9" y="464.1" width="1.1" height="1.1" fill="#cf86d8"/>
<circle cx="401.1" cy="462.0" r="1.2" fill="#ab38bb"/>
<rect x="401.1" y="461.3" width="1.3" height="1.2" fill="#e4bfe9"/>
<circle cx="401.1" cy="468.3" r="1.1" fill="#b13ec1"/>
<circle cx="403.1" cy="461.5" r="1.2" fill="#ab38bb"/>
<circle cx="404.6" cy="466.0" r="1.2" fill="#ab38bb"/>
<circle cx="405.7" cy="461.8" r="1.2" fill="#ab38bb"/>
<circle cx="407.3" cy="461.8" r="1.2" fill="#ab38bb"/>
<circle cx="409.5" cy="461.5" r="1.2" fill="#ab38bb"/>
<circle cx="410.4" cy="462.2" r="1.2" fill="#ab38bb"/>
<circle cx="411.6" cy="462.2" r="1.2" fill="#ab38bb"/>
<circle cx="413.6" cy="462.2" r="1.2" fill="#ab38bb"/>
<circle cx="414.6" cy="465.7" r="1.2" fill="#ab38bb"/>
<circle cx="416.3" cy="461.0" r="1.2" fill="#ab38bb"/>
<circle cx="417.7" cy="466.2" r="1.2" fill="#ab38bb"/>
<circle cx="419.2" cy="462.1" r="1.2" fill="#ab38bb"/>
<circle cx="419.2" cy="468.1" r="1.1" fill="#b13ec1"/>
<circle cx="421.0" cy="466.8" r="1.2" fill="#ab38bb"/>
<circle cx="423.1" cy="466.1" r="1.2" fill="#ab38bb"/>
<rect x="423.1" y="460.7" width="1.3" height="1.2" fill="#e4bfe9"/>
<circle cx="425.3" cy="466.7" r="1.2" fill="#ab38bb"/>
<circle cx="427.1" cy="466.1" r="1.2" fill="#ab38bb"/>
<rect x="427.1" y="463.1" width="1.1" height="1.1" fill="#cf86d8"/>
<circle cx="428.3" cy="466.7" r="1.2" fill="#ab38bb"/>
<circle cx="429.3" cy="461.2" r="1.2" fill="#ab38bb"/>
<rect x="429.3" y="462.8" width="1.1" height="1.1" fill="#cf86d8"/>
<circle cx="430.8" cy="461.6" r="1.2" fill="#ab38bb"/>
<rect x="430.8" y="461.5" width="1.3" height="1.2" fill="#e4bfe9"/>
<circle cx="431.9" cy="465.9" r="1.2" fill="#ab38bb"/>
<rect x="431.9" y="461.2" width="1.3" height="1.2" fill="#e4bfe9"/>
<circle cx="433.0" cy="461.9" r="1.2" fill="#ab38bb"/>
<circle cx="433.9" cy="465.7" r="1.2" fill="#ab38bb"/>
<circle cx="435.5" cy="466.8" r="1.2" fill="#ab38bb"/>
<circle cx="437.6" cy="461.5" r="1.2" fill="#ab38bb"/>
<circle cx="439.0" cy="466.3" r="1.2" fill="#ab38bb"/>
<circle cx="440.3" cy="465.9" r="1.2" fill="#ab38bb"/>
<rect x="440.3" y="460.6" width="1.3" height="1.2" fill="#e4bfe9"/>
<circle cx="441.2" cy="462.1" r="1.2" fill="#ab38bb"/>
<rect x="441.2" y="463.0" width="1.1" height="1.1" fill="#cf86d8"/>
<circle cx="442.2" cy="466.9" r="1.2" fill="#ab38bb"/>
<circle cx="443.3" cy="461.1" r="1.2" fill="#ab38bb"/>
<circle cx="445.1" cy="466.2" r="1.2" fill="#ab38bb"/>
<rect x="445.1" y="461.3" width="1.3" height="1.2" fill="#e4bfe9"/>
<circle cx="447.1" cy="466.6" r="1.2" fill="#ab38bb"/>
<rect x="447.1" y="461.0" width="1.3" height="1.2" fill="#e4bfe9"/>
<circle cx="449.0" cy="461.7" r="1.2" fill="#ab38bb"/>
<circle cx="450.4" cy="461.9" r="1.2" fill="#ab38bb"/>
<circle cx="451.6" cy="466.9" r="1.2" fill="#ab38bb"/>
<circle cx="452.9" cy="466.6" r="1.2" fill="#ab38bb"/>
<circle cx="452.9" cy="469.3" r="1.1" fill="#b13ec1"/>
<circle cx="455.1" cy="461.4" r="1.2" fill="#ab38bb"/>
<circle cx="455.1" cy="467.9" r="1.1" fill="#b13ec1"/>
<circle cx="457.1" cy="466.2" r="1.2" fill="#ab38bb"/>
<circle cx="458.3" cy="465.9" r="1.2" fill="#ab38bb"/>
<circle cx="460.0" cy="461.1" r="1.2" fill="#ab38bb"/>
<circle cx="462.1" cy="461.1" r="1.2" fill="#ab38bb"/>
<circle cx="463.7" cy="466.6" r="1.2" fill="#ab38bb"/>
<rect x="463.7" y="464.1" width="1.1" height="1.1" fill="#cf86d8"/>
<circle cx="463.7" cy="468.0" r="1.1" fill="#b13ec1"/>
<circle cx="465.0" cy="461.1" r="1.2" fill="#ab38bb"/>
<circle cx="465.0" cy="468.1" r="1.1" fill="#b13ec1"/>
<circle cx="466.4" cy="466.4" r="1.2" fill="#ab38bb"/>
<circle cx="468.2" cy="466.6" r="1.2" fill="#ab38bb"/>
<circle cx="470.3" cy="461.0" r="1.2" fill="#ab38bb"/>
<circle cx="471.3" cy="466.5" r="1.2" fill="#ab38bb"/>
<rect x="471.3" y="460.9" width="1.3" height="1.2" fill="#e4bfe9"/>
<circle cx="471.3" cy="468.3" r="1.1" fill="#b13ec1"/>
<circle cx="473.4" cy="465.9" r="1.2" fill="#ab38bb"/>
<rect x="473.4" y="460.9" width="1.3" height="1.2" fill="#e4bfe9"/>
<circle cx="474.9" cy="466.9" r="1.2" fill="#ab38bb"/>
<rect x="474.9" y="464.4" width="1.1" height="1.1" fill="#cf86d8"/>
<circle cx="477.1" cy="465.6" r="1.2" fill="#ab38bb"/>
<circle cx="479.2" cy="465.7" r="1.2" fill="#ab38bb"/>
<circle cx="480.6" cy="462.0" r="1.2" fill="#ab38bb"/>
<circle cx="482.1" cy="461.7" r="1.2" fill="#ab38bb"/>
<circle cx="483.9" cy="466.9" r="1.2" fill="#ab38bb"/>
<circle cx="485.3" cy="466.4" r="1.2" fill="#ab38bb"/>
<circle cx="486.2" cy="461.6" r="1.2" fill="#ab38bb"/>
<rect x="486.2" y="461.4" width="1.3" height="1.2" fill="#e4bfe9"/>
<circle cx="488.3" cy="461.5" r="1.2" fill="#ab38bb"/>
<circle cx="489.5" cy="461.1" r="1.2" fill="#ab38bb"/>
<circle cx="490.6" cy="466.0" r="1.2" fill="#ab38bb"/>
<circle cx="492.8" cy="461.8" r="1.2" fill="#ab38bb"/>
<rect x="492.8" y="464.4" width="1.1" height="1.1" fill="#cf86d8"/>
<circle cx="494.0" cy="466.0" r="1.2" fill="#ab38bb"/>
<circle cx="495.5" cy="466.5" r="1.2" fill="#ab38bb"/>
<rect x="495.5" y="461.0" width="1.3" height="1.2" fill="#e4bfe9"/>
<circle cx="496.7" cy="461.6" r="1.2" fill="#ab38bb"/>
<circle cx="497.8" cy="466.9" r="1.2" fill="#ab38bb"/>
<circle cx="499.3" cy="461.3" r="1.2" fill="#ab38bb"/>
<rect x="499.3" y="460.8" width="1.3" height="1.2" fill="#e4bfe9"/>
<circle cx="499.3" cy="468.9" r="1.1" fill="#b13ec1"/>
<circle cx="501.0" cy="466.7" r="1.2" fill="#ab38bb"/>
<rect x="501.0" y="460.8" width="1.3" height="1.2" fill="#e4bfe9"/>
<rect x="501.0" y="464.0" width="1.1" height="1.1" fill="#cf86d8"/>
<circle cx="502.6" cy="466.4" r="1.2" fill="#ab38bb"/>
<circle cx="503.6" cy="465.7" r="1.2" fill="#ab38bb"/>
<circle cx="505.2" cy="465.6" r="1.2" fill="#ab38bb"/>
<circle cx="506.8" cy="466.6" r="1.2" fill="#ab38bb"/>
<circle cx="508.6" cy="461.6" r="1.2" fill="#ab38bb"/>
<rect x="508.6" y="460.5" width="1.3" height="1.2" fill="#e4bfe9"/>
<circle cx="510.3" cy="466.7" r="1.2" fill="#ab38bb"/>
<circle cx="512.5" cy="461.2" r="1.2" fill="#ab38bb"/>
<circle cx="514.7" cy="460.9" r="1.2" fill="#ab38bb"/>
<circle cx="516.0" cy="462.2" r="1.2" fill="#ab38bb"/>
<circle cx="517.8" cy="466.4" r="1.2" fill="#ab38bb"/>
<circle cx="519.8" cy="462.0" r="1.2" fill="#ab38bb"/>
<circle cx="520.8" cy="461.1" r="1.2" fill="#ab38bb"/>
<circle cx="520.8" cy="469.5" r="1.1" fill="#b13ec1"/>
<circle cx="522.2" cy="461.9" r="1.2" fill="#ab38bb"/>
<circle cx="523.9" cy="465.9" r="1.2" fill="#ab38bb"/>
<rect x="523.9" y="463.7" width="1.1" height="1.1" fill="#cf86d8"/>
<circle cx="525.9" cy="462.2" r="1.2" fill="#ab38bb"/>
<circle cx="527.6" cy="461.7" r="1.2" fill="#ab38bb"/>
<circle cx="529.5" cy="461.3" r="1.2" fill="#ab38bb"/>
<circle cx="530.9" cy="466.0" r="1.2" fill="#ab38bb"/>
<circle cx="530.9" cy="468.1" r="1.1" fill="#b13ec1"/>
<circle cx="532.6" cy="461.6" r="1.2" fill="#ab38bb"/>
<circle cx="534.7" cy="465.9" r="1.2" fill="#ab38bb"/>
<circle cx="536.0" cy="466.4" r="1.2" fill="#ab38bb"/>
<circle cx="538.2" cy="461.0" r="1.2" fill="#ab38bb"/>
<circle cx="539.7" cy="461.5" r="1.2" fill="#ab38bb"/>
<rect x="539.7" y="464.3" width="1.1" height="1.1" fill="#cf86d8"/>
<circle cx="541.0" cy="466.1" r="1.2" fill="#ab38bb"/>
<circle cx="542.6" cy="466.6" r="1.2" fill="#ab38bb"/>
<circle cx="543.6" cy="465.8" r="1.2" fill="#ab38bb"/>
<circle cx="545.3" cy="465.8" r="1.2" fill="#ab38bb"/>
<circle cx="547.4" cy="466.4" r="1.2" fill="#ab38bb"/>
<circle cx="549.2" cy="466.5" r="1.2" fill="#ab38bb"/>
<circle cx="549.2" cy="468.1" r="1.1" fill="#b13ec1"/>
<circle cx="550.7" cy="461.7" r="1.2" fill="#ab38bb"/>
<circle cx="552.7" cy="465.7" r="1.2" fill="#ab38bb"/>
<circle cx="553.7" cy="465.9" r="1.2" fill="#ab38bb"/>
<circle cx="555.1" cy="466.7" r="1.2" fill="#ab38bb"/>
<rect x="555.1" y="460.6" width="1.3" height="1.2" fill="#e4bfe9"/>
<circle cx="555.1" cy="469.4" r="1.1" fill="#b13ec1"/>
<circle cx="556.4" cy="461.4" r="1.2" fill="#ab38bb"/>
<rect x="556.4" y="461.3" width="1.3" height="1.2" fill="#e4bfe9"/>
<circle cx="557.4" cy="466.2" r="1.2" fill="#ab38bb"/>
<circle cx="558.5" cy="466.0" r="1.2" fill="#ab38bb"/>
<rect x="558.5" y="461.1" width="1.3" height="1.2" fill="#e4bfe9"/>
<circle cx="559.5" cy="461.4" r="1.2" fill="#ab38bb"/>
<circle cx="561.0" cy="466.6" r="1.2" fill="#ab38bb"/>
<rect x="561.0" y="461.5" width="1.3" height="1.2" fill="#e4bfe9"/>
<circle cx="562.1" cy="466.4" r="1.2" fill="#ab38bb"/>
<circle cx="563.7" cy="461.1" r="1.2" fill="#ab38bb"/>
<rect x="563.7" y="460.7" width="1.3" height="1.2" fill="#e4bfe9"/>
<circle cx="565.5" cy="461.8" r="1.2" fill="#ab38bb"/>
<rect x="565.5" y="464.3" width="1.1" height="1.1" fill="#cf86d8"/>
<circle cx="566.6" cy="461.9" r="1.2" fill="#ab38bb"/>
<rect x="566.6" y="463.7" width="1.1" height="1.1" fill="#cf86d8"/>
<circle cx="568.4" cy="461.3" r="1.2" fill="#ab38bb"/>
<circle cx="569.9" cy="461.6" r="1.2" fill="#ab38bb"/>
<rect x="569.9" y="461.5" width="1.3" height="1.2" fill="#e4bfe9"/>
<circle cx="571.6" cy="461.3" r="1.2" fill="#ab38bb"/>
<circle cx="572.8" cy="461.8" r="1.2" fill="#ab38bb"/>
<rect x="572.8" y="461.1" width="1.3" height="1.2" fill="#e4bfe9"/>
<circle cx="573.8" cy="461.6" r="1.2" fill="#ab38bb"/>
<circle cx="575.4" cy="462.1" r="1.2" fill="#ab38bb"/>
<rect x="575.4" y="461.3" width="1.3" height="1.2" fill="#e4bfe9"/>
<circle cx="576.9" cy="466.7" r="1.2" fill="#ab38bb"/>
<circle cx="578.7" cy="462.2" r="1.2" fill="#ab38bb"/>
<rect x="578.7" y="463.0" width="1.1" height="1.1" fill="#cf86d8"/>
<circle cx="580.5" cy="466.4" r="1.2" fill="#ab38bb"/>
<circle cx="582.7" cy="465.9" r="1.2" fill="#ab38bb"/>
<circle cx="584.9" cy="461.4" r="1.2" fill="#ab38bb"/>
<circle cx="584.9" cy="468.6" r="1.1" fill="#b13ec1"/>
<circle cx="585.9" cy="466.7" r="1.2" fill="#ab38bb"/>
<circle cx="587.7" cy="466.7" r="1.2" fill="#ab38bb"/>
<rect x="587.7" y="461.3" width="1.3" height="1.2" fill="#e4bfe9"/>
<circle cx="589.4" cy="466.5" r="1.2" fill="#ab38bb"/>
<circle cx="591.4" cy="461.1" r="1.2" fill="#ab38bb"/>
<circle cx="593.0" cy="465.7" r="1.2" fill="#ab38bb"/>
<circle cx="594.1" cy="461.5" r="1.2" fill="#ab38bb"/>
<rect x="594.1" y="463.8" width="1.1" height="1.1" fill="#cf86d8"/>
<circle cx="595.4" cy="461.4" r="1.2" fill="#ab38bb"/>
<circle cx="597.0" cy="466.1" r="1.2" fill="#ab38bb"/>
<circle cx="597.0" cy="468.9" r="1.1" fill="#b13ec1"/>
<circle cx="597.9" cy="465.9" r="1.2" fill="#ab38bb"/>
<circle cx="599.5" cy="466.6" r="1.2" fill="#ab38bb"/>
<rect x="599.5" y="461.3" width="1.3" height="1.2" fill="#e4bfe9"/>
<circle cx="601.4" cy="461.4" r="1.2" fill="#ab38bb"/>
<circle cx="602.5" cy="460.9" r="1.2" fill="#ab38bb"/>
<circle cx="603.8" cy="466.0" r="1.2" fill="#ab38bb"/>
<rect x="603.8" y="463.8" width="1.1" height="1.1" fill="#cf86d8"/>
<circle cx="606.0" cy="462.1" r="1.2" fill="#ab38bb"/>
<circle cx="607.9" cy="461.2" r="1.2" fill="#ab38bb"/>
<circle cx="609.2" cy="461.6" r="1.2" fill="#ab38bb"/>
<circle cx="610.5" cy="466.2" r="1.2" fill="#ab38bb"/>
<circle cx="612.5" cy="466.4" r="1.2" fill="#ab38bb"/>
<circle cx="613.8" cy="461.8" r="1.2" fill="#ab38bb"/>
<circle cx="615.6" cy="466.9" r="1.2" fill="#ab38bb"/>
<circle cx="617.4" cy="466.1" r="1.2" fill="#ab38bb"/>
<rect x="617.4" y="463.4" width="1.1" height="1.1" fill="#cf86d8"/>
<circle cx="619.1" cy="466.9" r="1.2" fill="#ab38bb"/>
<circle cx="621.0" cy="466.0" r="1.2" fill="#ab38bb"/>
<circle cx="622.6" cy="461.1" r="1.2" fill="#ab38bb"/>
<circle cx="624.2" cy="466.1" r="1.2" fill="#ab38bb"/>
<circle cx="626.1" cy="466.5" r="1.2" fill="#ab38bb"/>
<circle cx="627.8" cy="466.2" r="1.2" fill="#ab38bb"/>
<rect x="627.8" y="460.7" width="1.3" height="1.2" fill="#e4bfe9"/>
<circle cx="629.5" cy="466.0" r="1.2" fill="#ab38bb"/>
<circle cx="630.5" cy="462.2" r="1.2" fill="#ab38bb"/>
<rect x="630.5" y="460.6" width="1.3" height="1.2" fill="#e4bfe9"/>
<circle cx="631.4" cy="467.0" r="1.2" fill="#ab38bb"/>
<circle cx="633.6" cy="462.0" r="1.2" fill="#ab38bb"/>
<circle cx="634.6" cy="461.1" r="1.2" fill="#ab38bb"/>
<rect x="634.6" y="460.8" width="1.3" height="1.2" fill="#e4bfe9"/>
<circle cx="636.6" cy="461.7" r="1.2" fill="#ab38bb"/>
<circle cx="637.8" cy="461.1" r="1.2" fill="#ab38bb"/>
<circle cx="639.1" cy="462.0" r="1.2" fill="#ab38bb"/>
<circle cx="640.2" cy="466.5" r="1.2" fill="#ab38bb"/>
<circle cx="642.1" cy="466.9" r="1.2" fill="#ab38bb"/>
<circle cx="644.1" cy="466.7" r="1.2" fill="#ab38bb"/>
<rect x="644.1" y="460.9" width="1.3" height="1.2" fill="#e4bfe9"/>
<circle cx="646.3" cy="461.4" r="1.2" fill="#ab38bb"/>
<circle cx="648.2" cy="461.3" r="1.2" fill="#ab38bb"/>
<circle cx="650.1" cy="461.1" r="1.2" fill="#ab38bb"/>
<circle cx="652.1" cy="465.9" r="1.2" fill="#ab38bb"/>
<circle cx="653.0" cy="466.7" r="1.2" fill="#ab38bb"/>
<circle cx="654.3" cy="461.0" r="1.2" fill="#ab38bb"/>
<circle cx="655.7" cy="461.4" r="1.2" fill="#ab38bb"/>
<circle cx="657.0" cy="466.5" r="1.2" fill="#ab38bb"/>
<circle cx="658.3" cy="466.7" r="1.2" fill="#ab38bb"/>
<circle cx="659.2" cy="465.8" r="1.2" fill="#ab38bb"/>
<circle cx="660.5" cy="466.1" r="1.2" fill="#ab38bb"/>
<rect x="660.5" y="463.3" width="1.1" height="1.1" fill="#cf86d8"/>
<circle cx="662.3" cy="466.6" r="1.2" fill="#ab38bb"/>
<circle cx="663.3" cy="462.0" r="1.2" fill="#ab38bb"/>
<circle cx="665.4" cy="461.1" r="1.2" fill="#ab38bb"/>
<circle cx="667.1" cy="466.6" r="1.2" fill="#ab38bb"/>
<circle cx="668.9" cy="461.9" r="1.2" fill="#ab38bb"/>
<circle cx="670.3" cy="466.4" r="1.2" fill="#ab38bb"/>
<circle cx="671.3" cy="466.3" r="1.2" fill="#ab38bb"/>
<circle cx="671.3" cy="469.3" r="1.1" fill="#b13ec1"/>
<circle cx="673.5" cy="462.0" r="1.2" fill="#ab38bb"/>
<circle cx="674.5" cy="466.8" r="1.2" fill="#ab38bb"/>
<circle cx="676.3" cy="465.8" r="1.2" fill="#ab38bb"/>
<circle cx="677.5" cy="462.0" r="1.2" fill="#ab38bb"/>
<circle cx="678.9" cy="461.0" r="1.2" fill="#ab38bb"/>
<circle cx="680.0" cy="466.2" r="1.2" fill="#ab38bb"/>
<rect x="680.0" y="460.7" width="1.3" height="1.2" fill="#e4bfe9"/>
<circle cx="681.0" cy="461.9" r="1.2" fill="#ab38bb"/>
<circle cx="682.7" cy="466.6" r="1.2" fill="#ab38bb"/>
<circle cx="684.6" cy="466.3" r="1.2" fill="#ab38bb"/>
<rect x="684.6" y="460.9" width="1.3" height="1.2" fill="#e4bfe9"/>
<circle cx="685.6" cy="465.8" r="1.2" fill="#ab38bb"/>
<circle cx="687.4" cy="466.6" r="1.2" fill="#ab38bb"/>
<circle cx="689.1" cy="461.3" r="1.2" fill="#ab38bb"/>
<circle cx="690.7" cy="461.2" r="1.2" fill="#ab38bb"/>
<circle cx="692.1" cy="462.0" r="1.2" fill="#ab38bb"/>
<rect x="692.1" y="461.2" width="1.3" height="1.2" fill="#e4bfe9"/>
<circle cx="694.1" cy="461.2" r="1.2" fill="#ab38bb"/>
<circle cx="695.7" cy="461.0" r="1.2" fill="#ab38bb"/>
<circle cx="695.7" cy="469.2" r="1.1" fill="#b13ec1"/>
<circle cx="697.7" cy="466.6" r="1.2" fill="#ab38bb"/>
<circle cx="698.9" cy="461.6" r="1.2" fill="#ab38bb"/>
<rect x="698.9" y="462.9" width="1.1" height="1.1" fill="#cf86d8"/>
<circle cx="700.8" cy="466.3" r="1.2" fill="#ab38bb"/>
<rect x="700.8" y="463.6" width="1.1" height="1.1" fill="#cf86d8"/>
<circle cx="701.9" cy="465.6" r="1.2" fill="#ab38bb"/>
<circle cx="703.7" cy="461.5" r="1.2" fill="#ab38bb"/>
<rect x="703.7" y="463.9" width="1.1" height="1.1" fill="#cf86d8"/>
<circle cx="705.6" cy="466.9" r="1.2" fill="#ab38bb"/>
<circle cx="707.3" cy="466.2" r="1.2" fill="#ab38bb"/>
<rect x="707.3" y="461.2" width="1.3" height="1.2" fill="#e4bfe9"/>
<circle cx="709.0" cy="460.9" r="1.2" fill="#ab38bb"/>
<circle cx="710.7" cy="466.4" r="1.2" fill="#ab38bb"/>
<circle cx="711.9" cy="461.3" r="1.2" fill="#ab38bb"/>
<circle cx="713.2" cy="461.7" r="1.2" fill="#ab38bb"/>
<circle cx="714.5" cy="465.8" r="1.2" fill="#ab38bb"/>
<circle cx="715.5" cy="466.8" r="1.2" fill="#ab38bb"/>
<rect x="715.5" y="460.9" width="1.3" height="1.2" fill="#e4bfe9"/>
<circle cx="716.6" cy="466.1" r="1.2" fill="#ab38bb"/>
<circle cx="716.6" cy="468.2" r="1.1" fill="#b13ec1"/>
<circle cx="718.2" cy="466.4" r="1.2" fill="#ab38bb"/>
<circle cx="719.2" cy="461.6" r="1.2" fill="#ab38bb"/>
<rect x="719.2" y="460.9" width="1.3" height="1.2" fill="#e4bfe9"/>
<circle cx="720.6" cy="466.1" r="1.2" fill="#ab38bb"/>
<circle cx="721.9" cy="461.3" r="1.2" fill="#ab38bb"/>
<circle cx="722.9" cy="465.9" r="1.2" fill="#ab38bb"/>
<circle cx="724.3" cy="461.1" r="1.2" fill="#ab38bb"/>
<circle cx="726.4" cy="466.3" r="1.2" fill="#ab38bb"/>
<circle cx="726.4" cy="468.9" r="1.1" fill="#b13ec1"/>
<circle cx="728.4" cy="465.9" r="1.2" fill="#ab38bb"/>
<circle cx="729.6" cy="466.6" r="1.2" fill="#ab38bb"/>
<rect x="729.6" y="463.0" width="1.1" height="1.1" fill="#cf86d8"/>
<circle cx="729.6" cy="468.9" r="1.1" fill="#b13ec1"/>
<circle cx="731.4" cy="461.1" r="1.2" fill="#ab38bb"/>
<circle cx="732.9" cy="466.3" r="1.2" fill="#ab38bb"/>
<circle cx="735.1" cy="461.8" r="1.2" fill="#ab38bb"/>
<rect x="735.1" y="460.5" width="1.3" height="1.2" fill="#e4bfe9"/>
<circle cx="736.4" cy="466.1" r="1.2" fill="#ab38bb"/>
<circle cx="737.4" cy="466.1" r="1.2" fill="#ab38bb"/>
<circle cx="738.6" cy="466.6" r="1.2" fill="#ab38bb"/>
<circle cx="739.6" cy="465.7" r="1.2" fill="#ab38bb"/>
<circle cx="740.6" cy="462.1" r="1.2" fill="#ab38bb"/>
<circle cx="742.1" cy="462.1" r="1.2" fill="#ab38bb"/>
<circle cx="743.1" cy="466.1" r="1.2" fill="#ab38bb"/>
<circle cx="745.1" cy="465.9" r="1.2" fill="#ab38bb"/>
<circle cx="745.1" cy="468.6" r="1.1" fill="#b13ec1"/>
<circle cx="747.3" cy="465.9" r="1.2" fill="#ab38bb"/>
<circle cx="748.7" cy="466.1" r="1.2" fill="#ab38bb"/>
<rect x="748.7" y="460.6" width="1.3" height="1.2" fill="#e4bfe9"/>
<circle cx="750.5" cy="461.7" r="1.2" fill="#ab38bb"/>
<circle cx="752.0" cy="461.7" r="1.2" fill="#ab38bb"/>
<circle cx="754.2" cy="466.2" r="1.2" fill="#ab38bb"/>
<circle cx="755.7" cy="466.7" r="1.2" fill="#ab38bb"/>
<circle cx="757.8" cy="466.2" r="1.2" fill="#ab38bb"/>
<rect x="757.8" y="464.5" width="1.1" height="1.1" fill="#cf86d8"/>
<circle cx="759.8" cy="461.4" r="1.2" fill="#ab38bb"/>
<circle cx="761.6" cy="462.1" r="1.2" fill="#ab38bb"/>
<rect x="761.6" y="461.1" width="1.3" height="1.2" fill="#e4bfe9"/>
<rect x="761.6" y="463.5" width="1.1" height="1.1" fill="#cf86d8"/>
<circle cx="763.0" cy="461.4" r="1.2" fill="#ab38bb"/>
<circle cx="764.6" cy="466.8" r="1.2" fill="#ab38bb"/>
<circle cx="766.1" cy="465.7" r="1.2" fill="#ab38bb"/>
<circle cx="766.1" cy="468.2" r="1.1" fill="#b13ec1"/>
<circle cx="767.8" cy="466.1" r="1.2" fill="#ab38bb"/>
<rect x="767.8" y="461.0" width="1.3" height="1.2" fill="#e4bfe9"/>
<circle cx="769.1" cy="461.8" r="1.2" fill="#ab38bb"/>
<circle cx="770.8" cy="466.1" r="1.2" fill="#ab38bb"/>
<circle cx="771.8" cy="461.3" r="1.2" fill="#ab38bb"/>
<circle cx="773.2" cy="466.3" r="1.2" fill="#ab38bb"/>
<circle cx="774.4" cy="466.2" r="1.2" fill="#ab38bb"/>
<circle cx="775.6" cy="466.0" r="1.2" fill="#ab38bb"/>
<circle cx="777.7" cy="461.7" r="1.2" fill="#ab38bb"/>
<circle cx="779.8" cy="466.2" r="1.2" fill="#ab38bb"/>
<circle cx="781.5" cy="461.9" r="1.2" fill="#ab38bb"/>
<rect x="781.5" y="463.5" width="1.1" height="1.1" fill="#cf86d8"/>
<circle cx="781.5" cy="469.0" r="1.1" fill="#b13ec1"/>
<circle cx="783.4" cy="461.2" r="1.2" fill="#ab38bb"/>
<circle cx="785.4" cy="466.7" r="1.2" fill="#ab38bb"/>
<circle cx="786.9" cy="461.3" r="1.2" fill="#ab38bb"/>
<circle cx="788.0" cy="466.3" r="1.2" fill="#ab38bb"/>
<circle cx="788.0" cy="469.2" r="1.1" fill="#b13ec1"/>
<circle cx="789.1" cy="466.4" r="1.2" fill="#ab38bb"/>
<rect x="789.1" y="463.9" width="1.1" height="1.1" fill="#cf86d8"/>
<circle cx="791.2" cy="462.2" r="1.2" fill="#ab38bb"/>
<circle cx="793.2" cy="461.0" r="1.2" fill="#ab38bb"/>
<circle cx="794.3" cy="461.1" r="1.2" fill="#ab38bb"/>
<circle cx="796.3" cy="465.9" r="1.2" fill="#ab38bb"/>
<rect x="796.3" y="460.7" width="1.3" height="1.2" fill="#e4bfe9"/>
<circle cx="797.2" cy="466.2" r="1.2" fill="#ab38bb"/>
<circle cx="798.3" cy="461.6" r="1.2" fill="#ab38bb"/>
<circle cx="799.9" cy="461.6" r="1.2" fill="#ab38bb"/>
<rect x="799.9" y="461.3" width="1.3" height="1.2" fill="#e4bfe9"/>
<circle cx="801.1" cy="461.8" r="1.2" fill="#ab38bb"/>
<rect x="801.1" y="461.3" width="1.3" height="1.2" fill="#e4bfe9"/>
<circle cx="802.8" cy="461.2" r="1.2" fill="#ab38bb"/>
<circle cx="803.9" cy="465.9" r="1.2" fill="#ab38bb"/>
<circle cx="805.3" cy="466.0" r="1.2" fill="#ab38bb"/>
<circle cx="807.1" cy="461.7" r="1.2" fill="#ab38bb"/>
<circle cx="809.1" cy="466.8" r="1.2" fill="#ab38bb"/>
<circle cx="811.2" cy="466.8" r="1.2" fill="#ab38bb"/>
<circle cx="812.7" cy="461.7" r="1.2" fill="#ab38bb"/>
<rect x="812.7" y="460.6" width="1.3" height="1.2" fill="#e4bfe9"/>
<rect x="812.7" y="463.5" width="1.1" height="1.1" fill="#cf86d8"/>
<circle cx="814.2" cy="466.0" r="1.2" fill="#ab38bb"/>
<circle cx="815.3" cy="465.8" r="1.2" fill="#ab38bb"/>
<circle cx="815.3" cy="469.2" r="1.1" fill="#b13ec1"/>
<circle cx="817.1" cy="462.2" r="1.2" fill="#ab38bb"/>
<circle cx="819.1" cy="461.0" r="1.2" fill="#ab38bb"/>
<rect x="819.1" y="460.6" width="1.3" height="1.2" fill="#e4bfe9"/>
<circle cx="819.1" cy="468.8" r="1.1" fill="#b13ec1"/>
<circle cx="820.7" cy="466.2" r="1.2" fill="#ab38bb"/>
<circle cx="821.7" cy="465.7" r="1.2" fill="#ab38bb"/>
<circle cx="823.8" cy="460.9" r="1.2" fill="#ab38bb"/>
<rect x="823.8" y="463.2" width="1.1" height="1.1" fill="#cf86d8"/>
<circle cx="825.7" cy="461.2" r="1.2" fill="#ab38bb"/>
<circle cx="827.0" cy="466.4" r="1.2" fill="#ab38bb"/>
<circle cx="828.6" cy="466.8" r="1.2" fill="#ab38bb"/>
<circle cx="830.8" cy="466.7" r="1.2" fill="#ab38bb"/>
<circle cx="832.0" cy="462.0" r="1.2" fill="#ab38bb"/>
<circle cx="834.0" cy="461.6" r="1.2" fill="#ab38bb"/>
<circle cx="835.4" cy="461.5" r="1.2" fill="#ab38bb"/>
<circle cx="835.4" cy="468.4" r="1.1" fill="#b13ec1"/>
<circle cx="837.4" cy="461.7" r="1.2" fill="#ab38bb"/>
<circle cx="839.4" cy="466.8" r="1.2" fill="#ab38bb"/>
<rect x="839.4" y="464.0" width="1.1" height="1.1" fill="#cf86d8"/>
<circle cx="841.2" cy="461.3" r="1.2" fill="#ab38bb"/>
<circle cx="842.4" cy="466.0" r="1.2" fill="#ab38bb"/>
<circle cx="844.3" cy="467.0" r="1.2" fill="#ab38bb"/>
<circle cx="845.3" cy="466.5" r="1.2" fill="#ab38bb"/>
<circle cx="847.5" cy="461.4" r="1.2" fill="#ab38bb"/>
<rect x="847.5" y="460.7" width="1.3" height="1.2" fill="#e4bfe9"/>
<circle cx="849.2" cy="466.4" r="1.2" fill="#ab38bb"/>
<circle cx="851.4" cy="461.5" r="1.2" fill="#ab38bb"/>
<circle cx="853.4" cy="461.6" r="1.2" fill="#ab38bb"/>
<circle cx="854.6" cy="465.9" r="1.2" fill="#ab38bb"/>
<circle cx="856.8" cy="461.7" r="1.2" fill="#ab38bb"/>
<rect x="856.8" y="464.4" width="1.1" height="1.1" fill="#cf86d8"/>
<circle cx="857.9" cy="466.0" r="1.2" fill="#ab38bb"/>
<circle cx="859.2" cy="461.8" r="1.2" fill="#ab38bb"/>
<rect x="859.2" y="461.5" width="1.3" height="1.2" fill="#e4bfe9"/>
<circle cx="860.5" cy="460.9" r="1.2" fill="#ab38bb"/>
<circle cx="862.0" cy="466.7" r="1.2" fill="#ab38bb"/>
<rect x="862.0" y="464.3" width="1.1" height="1.1" fill="#cf86d8"/>
<circle cx="863.9" cy="460.9" r="1.2" fill="#ab38bb"/>
<rect x="863.9" y="463.1" width="1.1" height="1.1" fill="#cf86d8"/>
<circle cx="865.1" cy="466.2" r="1.2" fill="#ab38bb"/>
<circle cx="866.2" cy="461.8" r="1.2" fill="#ab38bb"/>
<circle cx="867.9" cy="461.7" r="1.2" fill="#ab38bb"/>
<circle cx="869.6" cy="462.0" r="1.2" fill="#ab38bb"/>
<circle cx="871.7" cy="466.7" r="1.2" fill="#ab38bb"/>
<circle cx="873.8" cy="465.9" r="1.2" fill="#ab38bb"/>
<rect x="873.8" y="463.9" width="1.1" height="1.1" fill="#cf86d8"/>
<circle cx="874.8" cy="466.4" r="1.2" fill="#ab38bb"/>
<circle cx="876.7" cy="465.9" r="1.2" fill="#ab38bb"/>
<circle cx="878.8" cy="461.1" r="1.2" fill="#ab38bb"/>
<rect x="878.8" y="464.4" width="1.1" height="1.1" fill="#cf86d8"/>
<circle cx="879.8" cy="462.1" r="1.2" fill="#ab38bb"/>
<circle cx="881.8" cy="466.2" r="1.2" fill="#ab38bb"/>
<circle cx="883.2" cy="461.4" r="1.2" fill="#ab38bb"/>
<circle cx="884.3" cy="461.3" r="1.2" fill="#ab38bb"/>
<circle cx="886.3" cy="461.4" r="1.2" fill="#ab38bb"/>
<circle cx="888.1" cy="466.2" r="1.2" fill="#ab38bb"/>
<rect x="888.1" y="463.3" width="1.1" height="1.1" fill="#cf86d8"/>
<circle cx="889.7" cy="466.6" r="1.2" fill="#ab38bb"/>
<rect x="889.7" y="463.7" width="1.1" height="1.1" fill="#cf86d8"/>
<circle cx="891.4" cy="466.1" r="1.2" fill="#ab38bb"/>
<circle cx="892.9" cy="461.1" r="1.2" fill="#ab38bb"/>
<rect x="892.9" y="463.1" width="1.1" height="1.1" fill="#cf86d8"/>
<circle cx="895.1" cy="461.0" r="1.2" fill="#ab38bb"/>
<circle cx="896.1" cy="462.1" r="1.2" fill="#ab38bb"/>
<circle cx="897.2" cy="465.8" r="1.2" fill="#ab38bb"/>
<rect x="897.2" y="460.9" width="1.3" height="1.2" fill="#e4bfe9"/>
<rect x="897.2" y="464.5" width="1.1" height="1.1" fill="#cf86d8"/>
<circle cx="898.6" cy="466.7" r="1.2" fill="#ab38bb"/>
<rect x="898.6" y="461.4" width="1.3" height="1.2" fill="#e4bfe9"/>
<circle cx="898.6" cy="469.0" r="1.1" fill="#b13ec1"/>
<circle cx="899.9" cy="461.1" r="1.2" fill="#ab38bb"/>
<circle cx="901.7" cy="461.2" r="1.2" fill="#ab38bb"/>
<circle cx="903.2" cy="461.4" r="1.2" fill="#ab38bb"/>
<circle cx="905.3" cy="462.0" r="1.2" fill="#ab38bb"/>
<circle cx="907.1" cy="466.7" r="1.2" fill="#ab38bb"/>
<circle cx="909.2" cy="465.7" r="1.2" fill="#ab38bb"/>
<circle cx="911.2" cy="461.9" r="1.2" fill="#ab38bb"/>
<circle cx="912.8" cy="466.1" r="1.2" fill="#ab38bb"/>
<rect x="912.8" y="463.2" width="1.1" height="1.1" fill="#cf86d8"/>
<circle cx="913.8" cy="466.0" r="1.2" fill="#ab38bb"/>
<circle cx="914.7" cy="465.8" r="1.2" fill="#ab38bb"/>
<circle cx="916.8" cy="466.3" r="1.2" fill="#ab38bb"/>
<circle cx="918.5" cy="461.4" r="1.2" fill="#ab38bb"/>
<rect x="918.5" y="460.7" width="1.3" height="1.2" fill="#e4bfe9"/>
<polygon points="424.7,592 425.05,519.5 425.95,519.5 426.3,592" fill="#5656dc"/>
<polygon points="432.2,592 432.55,519.5 433.45,519.5 433.8,592" fill="#5656dc"/>
<polygon points="515.7,592 516.05,519.5 516.95,519.5 517.3,592" fill="#5656dc"/>
<polygon points="543.8000000000001,592 544.15,519.5 545.0500000000001,519.5 545.4,592" fill="#5656dc"/>
<polygon points="595.9000000000001,592 596.25,519.5 597.1500000000001,519.5 597.5,592" fill="#5656dc"/>
<polygon points="794.9000000000001,592 795.25,519.5 796.1500000000001,519.5 796.5,592" fill="#5656dc"/>
<line x1="752.5" y1="520" x2="752.5" y2="592" stroke="#e57a3a" stroke-width="1.5"/>
<circle cx="752.5" cy="520" r="4" fill="#e6a3a3"/><circle cx="752.5" cy="520" r="1.8" fill="#c33a3a"/>
<line x1="752.5" y1="466" x2="752.5" y2="482" stroke="#b13ec1" stroke-width="1.2"/>
<circle cx="752.5" cy="482.5" r="1.2" fill="#b13ec1"/>
</svg>
<!-- slider -->
<div class="a" style="left:47px;top:611.2px;width:866px;height:8.6px;background:linear-gradient(180deg,#7db6f6 0%,#66a9f3 50%,#5b9fee 100%)"></div>
<div class="a" style="left:41px;top:609.5px;width:12px;height:12px;border-radius:2px;background:#e6e6e6;border:1px solid #c8c8c8"></div>
<svg class="a" style="left:41px;top:609.5px" width="12" height="12" viewBox="0 0 12 12"><path d="M4 3.5v5M5.5 3.5v5M7 3.5v5M8.5 3.5v5" stroke="#888" stroke-width="0.6"/></svg>
<div class="a" style="left:907px;top:609.5px;width:12px;height:12px;border-radius:2px;background:#e6e6e6;border:1px solid #c8c8c8"></div>
<svg class="a" style="left:907px;top:609.5px" width="12" height="12" viewBox="0 0 12 12"><path d="M4 3.5v5M5.5 3.5v5M7 3.5v5M8.5 3.5v5" stroke="#888" stroke-width="0.6"/></svg>
<div class="a" style="left:30px;top:129px;width:60px;height:12px;font-size:10px;line-height:12px;text-align:center;color:rgba(0,0,0,0.05);transform:rotate(-22deg)">PerfDog</div>
<div class="a" style="left:270px;top:129px;width:60px;height:12px;font-size:10px;line-height:12px;text-align:center;color:rgba(0,0,0,0.05);transform:rotate(-22deg)">PerfDog</div>
<div class="a" style="left:510px;top:129px;width:60px;height:12px;font-size:10px;line-height:12px;text-align:center;color:rgba(0,0,0,0.05);transform:rotate(-22deg)">PerfDog</div>
<div class="a" style="left:32px;top:339px;width:60px;height:12px;font-size:10px;line-height:12px;text-align:center;color:rgba(0,0,0,0.05);transform:rotate(-22deg)">PerfDog</div>
<div class="a" style="left:269px;top:339px;width:60px;height:12px;font-size:10px;line-height:12px;text-align:center;color:rgba(0,0,0,0.05);transform:rotate(-22deg)">PerfDog</div>
<div class="a" style="left:507px;top:340px;width:60px;height:12px;font-size:10px;line-height:12px;text-align:center;color:rgba(0,0,0,0.05);transform:rotate(-22deg)">PerfDog</div>
<!-- legend -->
<svg class="a" style="left:267px;top:626px" width="12" height="8" viewBox="0 0 12 8"><line x1="1" y1="4" x2="11" y2="4" stroke="#b13ec1" stroke-width="3"/><circle cx="6" cy="4" r="1.6" fill="#fff" stroke="#b13ec1" stroke-width="0.9"/></svg>
<div class="a lg" style="left:283.5px">FPS</div>
<svg class="a" style="left:308px;top:626px" width="12" height="8" viewBox="0 0 12 8"><line x1="1" y1="4" x2="11" y2="4" stroke="#7ab356" stroke-width="3"/></svg>
<div class="a lg" style="left:324.5px">Smooth</div>
<svg class="a" style="left:361.5px;top:626px" width="12" height="8" viewBox="0 0 12 8"><line x1="1" y1="4" x2="11" y2="4" stroke="#6fb5a8" stroke-width="3"/></svg>
<div class="a lg" style="left:377.5px">1%Low(FPS)</div>
<svg class="a" style="left:431.5px;top:626px" width="12" height="8" viewBox="0 0 12 8"><line x1="1" y1="4" x2="11" y2="4" stroke="#4a4fd8" stroke-width="3"/></svg>
<div class="a lg" style="left:447.5px">SmallJank</div>
<svg class="a" style="left:494px;top:626px" width="12" height="8" viewBox="0 0 12 8"><line x1="1" y1="4" x2="11" y2="4" stroke="#e57a3a" stroke-width="3"/><circle cx="6" cy="4" r="1.6" fill="#fff" stroke="#e57a3a" stroke-width="0.9"/></svg>
<div class="a lg" style="left:509.5px">Jank</div>
<svg class="a" style="left:536.5px;top:626px" width="12" height="8" viewBox="0 0 12 8"><line x1="1" y1="4" x2="11" y2="4" stroke="#c33a3a" stroke-width="3"/><circle cx="6" cy="4" r="1.6" fill="#fff" stroke="#c33a3a" stroke-width="0.9"/></svg>
<div class="a lg" style="left:552.5px">BigJank</div>
<svg class="a" style="left:591px;top:626px" width="12" height="8" viewBox="0 0 12 8"><line x1="1" y1="4" x2="11" y2="4" stroke="#5f7fe0" stroke-width="3"/></svg>
<div class="a lg" style="left:606.5px">Stutter</div>
<svg class="a" style="left:641px;top:626px" width="12" height="8" viewBox="0 0 12 8"><line x1="1" y1="4" x2="11" y2="4" stroke="#8ec5f0" stroke-width="3"/></svg>
<div class="a lg" style="left:657.5px">InterFrame</div>
<div class="a" style="left:872.5px;top:624.5px;font-size:7.8px;color:#4a6cf0;line-height:11px">全隐藏</div>
</body></html>
